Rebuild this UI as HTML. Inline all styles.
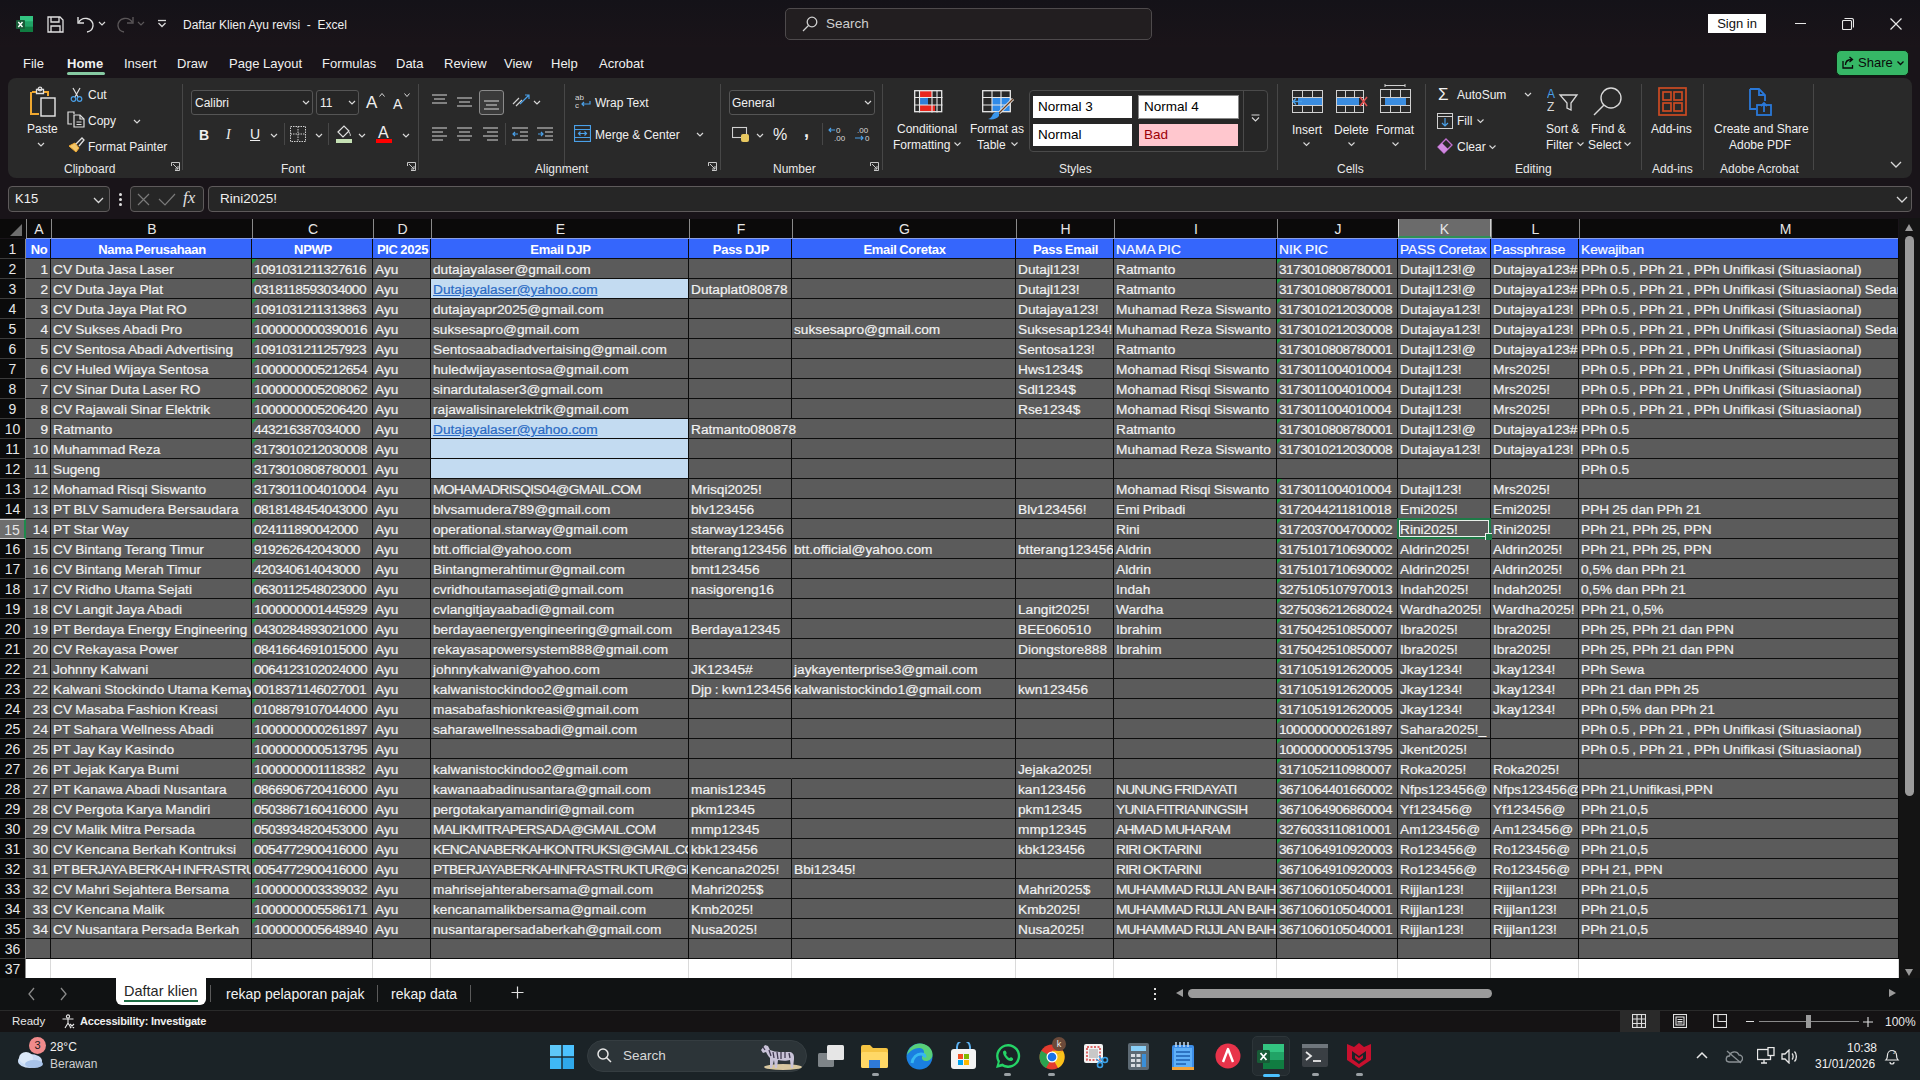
<!DOCTYPE html>
<html><head><meta charset="utf-8"><title>Excel</title>
<style>
*{box-sizing:border-box;margin:0;padding:0}
html,body{width:1920px;height:1080px;overflow:hidden;background:#191419;font-family:"Liberation Sans",sans-serif;color:#fff}
.a{position:absolute}
#titlebar{position:absolute;left:0;top:0;width:1920px;height:47px;background:linear-gradient(#141218,#1a1419)}
#menubar{position:absolute;left:0;top:47px;width:1920px;height:31px;background:#191419}
.mi{position:absolute;top:9px;font-size:13px;color:#f0f0f0;white-space:nowrap}
#ribbon{position:absolute;left:8px;top:78px;width:1904px;height:100px;background:#292929;border-radius:8px}
.rt{position:absolute;margin-top:1px;font-size:12px;color:#f0f0f0;white-space:nowrap}
.gl{position:absolute;top:84px;font-size:12px;color:#e8e8e8;white-space:nowrap}
.sep{position:absolute;top:6px;width:1px;height:86px;background:#474747}
.launch{position:absolute;top:84px;width:9px;height:9px}
#fbar{position:absolute;left:0;top:178px;width:1920px;height:40px;background:#191419}
.box{position:absolute;top:8px;height:26px;background:#262626;border:1px solid #5e5a5b;border-radius:4px}
#grid{position:absolute;left:0;top:0;width:1920px;height:0}
#colhdr{position:absolute;left:0;top:219px;width:1898px;height:19px;background:#0b0a0a}
.ch{position:absolute;top:0;height:19px;border-left:1px solid #8a8a8a;font-size:14px;line-height:21px;text-align:center;color:#e6e6e6}
.ch.sel{background:#6b6b6b;border-left:1px solid #d0d0d0;border-right:1px solid #d0d0d0;border-bottom:2px solid #2f8f56}
.corner{position:absolute;left:10px;top:5px;width:0;height:0;border-left:12px solid transparent;border-bottom:12px solid #6e6e6e}
.rh{position:absolute;left:0;width:26px;height:20px;background:#0b0b0b;border-bottom:1px solid #3c3c3c;border-right:1px solid #8c8c8c;font-size:14px;line-height:21px;text-align:center;color:#e6e6e6}
.rh.sel{background:#6e6e6e;border-right:2px solid #1f8a4c;border-top:1px solid #cfcfcf;border-bottom:1px solid #cfcfcf}
.c{position:absolute;height:20px;background:#5b5b5b;border-right:1px solid #0d0d0d;border-bottom:1px solid #0d0d0d;font-size:13.7px;line-height:20px;padding-top:1px;padding-left:2px;color:#f2f2f2;white-space:nowrap;overflow:hidden;word-spacing:-0.6px;-webkit-text-stroke:0.2px currentColor}
.c.hd{background:#3566fc;color:#fff}
.c.b{-webkit-text-stroke:0;font-weight:bold;text-align:center;font-size:13px;letter-spacing:-0.3px}
.c.num{text-align:right;padding-right:2px}
.c.dig{letter-spacing:-0.55px}
.c.caps{letter-spacing:-0.7px}
.c.lb{background:#c3dbf1;color:#2a6ac4}
.c.lb u{text-decoration:underline;text-decoration-color:#2a6ac4}
.c.ovf{overflow:visible;z-index:2}
.c.nbr{border-right-color:#5b5b5b}
.c.w{background:#fff;border-right:1px solid #dadada;border-bottom:none}
.c.tri::before{content:"";position:absolute;left:0;top:0;border-top:5px solid #1b9a3b;border-right:5px solid transparent}
#active{position:absolute;left:1397px;top:518px;width:94px;height:21px;border:2px solid #1e7a47;box-shadow:inset 0 0 0 1px #e8f0ea;z-index:5}
#active::after{content:"";position:absolute;right:-3px;bottom:-3px;width:6px;height:6px;background:#1e7a47;border-left:1px solid #f0f0f0;border-top:1px solid #f0f0f0}
#vscroll{position:absolute;left:1899px;top:218px;width:21px;height:760px;background:#141414}
</style></head><body>
<div id="titlebar">
 <svg class="a" style="left:16px;top:15px" width="17" height="18" viewBox="0 0 17 18">
  <rect x="4" y="1" width="13" height="16" rx="1.5" fill="#21a366"/>
  <rect x="4" y="1" width="13" height="5.3" fill="#33c481"/>
  <rect x="4" y="11.7" width="13" height="5.3" fill="#107c41"/>
  <rect x="0" y="5" width="9" height="9" rx="1" fill="#185c37"/>
  <path d="M2.3 7l4.2 5M6.5 7l-4.2 5" stroke="#fff" stroke-width="1.4"/>
 </svg>
 <svg class="a" style="left:47px;top:16px" width="17" height="17" viewBox="0 0 17 17" fill="none" stroke="#e0e0e0" stroke-width="1.3">
  <path d="M1 1h12l3 3v12H1z"/><path d="M4 1v5h8V1"/><path d="M4 16v-6h9v6"/>
 </svg>
 <svg class="a" style="left:76px;top:15px" width="20" height="18" viewBox="0 0 20 18" fill="none" stroke="#e0e0e0" stroke-width="1.4">
  <path d="M2 2v6h6"/><path d="M2.5 7.5C4.5 4 8 3 11 3.5c4 .7 6.5 4 6 7.5-.5 3.3-3 5.5-6 6"/>
 </svg>
 <svg class="a" style="left:98px;top:21px" width="8" height="5" viewBox="0 0 8 5" fill="none" stroke="#d8d8d8" stroke-width="1.2"><path d="M1 1l3 3 3-3"/></svg>
 <svg class="a" style="left:115px;top:15px" width="20" height="18" viewBox="0 0 20 18" fill="none" stroke="#5a5658" stroke-width="1.4">
  <path d="M18 2v6h-6"/><path d="M17.5 7.5C15.5 4 12 3 9 3.5c-4 .7-6.5 4-6 7.5.5 3.3 3 5.5 6 6"/>
 </svg>
 <svg class="a" style="left:137px;top:21px" width="8" height="5" viewBox="0 0 8 5" fill="none" stroke="#5a5658" stroke-width="1.2"><path d="M1 1l3 3 3-3"/></svg>
 <svg class="a" style="left:157px;top:19px" width="10" height="9" viewBox="0 0 10 9" fill="none" stroke="#d8d8d8" stroke-width="1.3"><path d="M1 1.5h8"/><path d="M1.5 4l3.5 3.5L8.5 4"/></svg>
 <div class="a" style="left:183px;top:18px;font-size:12px;color:#f0f0f0;white-space:nowrap">Daftar Klien Ayu revisi&nbsp; - &nbsp;Excel</div>
 <div class="a" style="left:785px;top:8px;width:367px;height:32px;border:1px solid #4e4a4c;border-radius:5px;background:#221e20"></div>
 <svg class="a" style="left:802px;top:16px" width="16" height="16" viewBox="0 0 16 16" fill="none" stroke="#d0d0d0" stroke-width="1.3"><circle cx="10" cy="6" r="4.8"/><path d="M6.5 9.5L1 15"/></svg>
 <div class="a" style="left:826px;top:16px;font-size:13.5px;color:#cfcfcf">Search</div>
 <div class="a" style="left:1708px;top:14px;width:58px;height:19px;background:#fff;color:#111;font-size:13px;line-height:19px;text-align:center">Sign in</div>
 <div class="a" style="left:1795px;top:23px;width:11px;height:1px;background:#e8e8e8"></div>
 <svg class="a" style="left:1842px;top:18px" width="12" height="12" viewBox="0 0 12 12" fill="none" stroke="#e8e8e8" stroke-width="1.1"><rect x="0.5" y="2.5" width="9" height="9" rx="1"/><path d="M2.5 0.5h7a2 2 0 0 1 2 2v7"/></svg>
 <svg class="a" style="left:1890px;top:18px" width="12" height="12" viewBox="0 0 12 12" stroke="#e8e8e8" stroke-width="1.2"><path d="M0.5 0.5l11 11M11.5 0.5l-11 11"/></svg>
</div>
<div id="menubar">
 <div class="mi" style="left:23px">File</div>
 <div class="mi" style="left:67px;font-weight:bold">Home</div>
 <div class="a" style="left:67px;top:25px;width:38px;height:3px;border-radius:2px;background:#86c9a2"></div>
 <div class="mi" style="left:124px">Insert</div>
 <div class="mi" style="left:177px">Draw</div>
 <div class="mi" style="left:229px">Page Layout</div>
 <div class="mi" style="left:322px">Formulas</div>
 <div class="mi" style="left:396px">Data</div>
 <div class="mi" style="left:444px">Review</div>
 <div class="mi" style="left:504px">View</div>
 <div class="mi" style="left:551px">Help</div>
 <div class="mi" style="left:599px">Acrobat</div>
 <div class="a" style="left:1836px;top:3px;width:73px;height:26px;background:#36b766;border:1.5px solid #0b1f10;border-radius:5px"></div>
 <svg class="a" style="left:1842px;top:9px" width="13" height="13" viewBox="0 0 13 13" fill="none" stroke="#0a0a0a" stroke-width="1.3"><path d="M1 5v7h9.5V9"/><path d="M3.5 9c0-3.5 2.5-5.5 6-5.5M7.5 1l3 2.5-3 2.5"/></svg>
 <div class="mi" style="left:1858px;top:8px;color:#0a0a0a;font-size:13px">Share</div>
 <svg class="a" style="left:1897px;top:14px" width="7" height="5" viewBox="0 0 7 5" fill="none" stroke="#0a0a0a" stroke-width="1.3"><path d="M0.5 0.5l3 3 3-3"/></svg>
</div>
<div id="ribbon">
 <!-- Clipboard -->
 <svg class="a" style="left:20px;top:8px" width="30" height="32" viewBox="0 0 30 32" fill="none">
  <path d="M4 6h5M15 6h5v4" stroke="#f0a830" stroke-width="2"/>
  <path d="M3 6v22h8" stroke="#f0a830" stroke-width="2"/>
  <path d="M8.5 3.5h7v4h-7z" stroke="#e0e0e0" stroke-width="1.3"/><circle cx="12" cy="3" r="1.8" stroke="#e0e0e0" stroke-width="1.2"/>
  <rect x="13" y="12" width="14" height="18" stroke="#e8e8e8" stroke-width="1.4"/>
 </svg>
 <div class="rt" style="left:19px;top:43px">Paste</div>
 <svg class="a" style="left:29px;top:64px" width="8" height="5" viewBox="0 0 8 5" fill="none" stroke="#d8d8d8" stroke-width="1.2"><path d="M1 1l3 3 3-3"/></svg>
 <svg class="a" style="left:62px;top:9px" width="13" height="15" viewBox="0 0 13 15" fill="none" stroke-width="1.2">
  <path d="M3 1l5 9M10 1L5 10" stroke="#e0e0e0"/><circle cx="3.5" cy="12" r="2.3" stroke="#4aa0e8"/><circle cx="9.5" cy="12" r="2.3" stroke="#4aa0e8"/>
 </svg>
 <div class="rt" style="left:80px;top:9px">Cut</div>
 <svg class="a" style="left:59px;top:33px" width="18" height="17" viewBox="0 0 18 17" fill="none" stroke="#e0e0e0" stroke-width="1.2">
  <path d="M7 3V1H1v12h4"/><path d="M7 4h6l4 4v8H7z"/><path d="M13 4v4h4M9.5 11h5M9.5 13.5h5"/>
 </svg>
 <div class="rt" style="left:80px;top:35px">Copy</div>
 <svg class="a" style="left:125px;top:41px" width="8" height="5" viewBox="0 0 8 5" fill="none" stroke="#d8d8d8" stroke-width="1.2"><path d="M1 1l3 3 3-3"/></svg>
 <svg class="a" style="left:59px;top:59px" width="18" height="16" viewBox="0 0 18 16" fill="none">
  <path d="M2 9l6-3 4 5-3 4z" fill="#f3c76b" stroke="#f0a830" stroke-width="1"/><path d="M9 7l6-6 2 2-5 6" stroke="#e0e0e0" stroke-width="1.3"/>
 </svg>
 <div class="rt" style="left:80px;top:61px">Format Painter</div>
 <div class="gl" style="left:56px">Clipboard</div>
 <svg class="launch" style="left:163px" viewBox="0 0 9 9" fill="none" stroke="#c8c8c8" stroke-width="1"><path d="M0.5 4V0.5h8v8H4"/><path d="M2 2l5 5M7 4v3H4"/></svg>
 <div class="sep" style="left:174px"></div>
 <!-- Font -->
 <div class="a" style="left:183px;top:12px;width:122px;height:25px;background:#262626;border:1px solid #555;border-radius:3px"></div>
 <div class="rt" style="left:187px;top:17px">Calibri</div>
 <svg class="a" style="left:294px;top:22px" width="8" height="5" viewBox="0 0 8 5" fill="none" stroke="#d8d8d8" stroke-width="1.2"><path d="M1 1l3 3 3-3"/></svg>
 <div class="a" style="left:308px;top:12px;width:43px;height:25px;background:#262626;border:1px solid #555;border-radius:3px"></div>
 <div class="rt" style="left:312px;top:17px">11</div>
 <svg class="a" style="left:340px;top:22px" width="8" height="5" viewBox="0 0 8 5" fill="none" stroke="#d8d8d8" stroke-width="1.2"><path d="M1 1l3 3 3-3"/></svg>
 <div class="rt" style="left:358px;top:14px;font-size:17px">A</div><svg class="a" style="left:371px;top:15px" width="6" height="4" viewBox="0 0 6 4" fill="none" stroke="#d8d8d8" stroke-width="1"><path d="M0.5 3.5l2.5-3 2.5 3"/></svg>
 <div class="rt" style="left:385px;top:17px;font-size:14px">A</div><svg class="a" style="left:396px;top:15px" width="6" height="4" viewBox="0 0 6 4" fill="none" stroke="#d8d8d8" stroke-width="1"><path d="M0.5 0.5l2.5 3 2.5-3"/></svg>
 <div class="rt" style="left:191px;top:48px;font-weight:bold;font-size:14px">B</div>
 <div class="rt" style="left:218px;top:48px;font-style:italic;font-size:14px;font-family:'Liberation Serif',serif">I</div>
 <div class="rt" style="left:242px;top:47px;font-size:14px;text-decoration:underline">U</div>
 <svg class="a" style="left:262px;top:55px" width="8" height="5" viewBox="0 0 8 5" fill="none" stroke="#d8d8d8" stroke-width="1.2"><path d="M1 1l3 3 3-3"/></svg>
 <div class="a" style="left:276px;top:45px;width:1px;height:22px;background:#474747"></div>
 <svg class="a" style="left:282px;top:48px" width="16" height="16" viewBox="0 0 16 16" fill="none" stroke="#d0d0d0" stroke-width="1" stroke-dasharray="1.5 1"><rect x="0.5" y="0.5" width="15" height="15"/><path d="M8 0.5v15M0.5 8h15"/></svg>
 <svg class="a" style="left:307px;top:55px" width="8" height="5" viewBox="0 0 8 5" fill="none" stroke="#d8d8d8" stroke-width="1.2"><path d="M1 1l3 3 3-3"/></svg>
 <div class="a" style="left:320px;top:45px;width:1px;height:22px;background:#474747"></div>
 <svg class="a" style="left:327px;top:45px" width="18" height="20" viewBox="0 0 18 20" fill="none">
  <path d="M3 9l6-6 5 5-6 6z" stroke="#e0e0e0" stroke-width="1.2"/><path d="M14 9c1 2 2 3 1 4" stroke="#e0e0e0" stroke-width="1"/>
  <rect x="1" y="16" width="16" height="4" fill="#c5e0b4"/>
 </svg>
 <svg class="a" style="left:350px;top:55px" width="8" height="5" viewBox="0 0 8 5" fill="none" stroke="#d8d8d8" stroke-width="1.2"><path d="M1 1l3 3 3-3"/></svg>
 <div class="rt" style="left:370px;top:45px;font-size:16px">A</div>
 <div class="a" style="left:368px;top:61px;width:16px;height:4px;background:#ff0000"></div>
 <svg class="a" style="left:394px;top:55px" width="8" height="5" viewBox="0 0 8 5" fill="none" stroke="#d8d8d8" stroke-width="1.2"><path d="M1 1l3 3 3-3"/></svg>
 <div class="gl" style="left:273px">Font</div>
 <svg class="launch" style="left:399px" viewBox="0 0 9 9" fill="none" stroke="#c8c8c8" stroke-width="1"><path d="M0.5 4V0.5h8v8H4"/><path d="M2 2l5 5M7 4v3H4"/></svg>
 <div class="sep" style="left:410px"></div>
 <!-- Alignment -->
 <svg class="a" style="left:424px;top:16px" width="15" height="13" viewBox="0 0 15 13" stroke="#d8d8d8" stroke-width="1.2"><path d="M0 1h15M2 5h11M0 9h15"/></svg>
 <svg class="a" style="left:449px;top:19px" width="15" height="13" viewBox="0 0 15 13" stroke="#d8d8d8" stroke-width="1.2"><path d="M0 1h15M2 5h11M0 9h15"/></svg>
 <div class="a" style="left:471px;top:12px;width:25px;height:25px;border:1px solid #8a8a8a;border-radius:3px;background:#3a3a3a"></div>
 <svg class="a" style="left:476px;top:20px" width="15" height="13" viewBox="0 0 15 13" stroke="#d8d8d8" stroke-width="1.2"><path d="M0 3h15M2 7h11M0 11h15"/></svg>
 <svg class="a" style="left:503px;top:14px" width="20" height="18" viewBox="0 0 20 18" fill="none" stroke-width="1.2"><path d="M2 12l6-6M5 14l6-6" stroke="#d0d0d0"/><path d="M9 12l9-9M14 3h4v4" stroke="#4aa0e8"/></svg>
 <svg class="a" style="left:525px;top:22px" width="8" height="5" viewBox="0 0 8 5" fill="none" stroke="#d8d8d8" stroke-width="1.2"><path d="M1 1l3 3 3-3"/></svg>
 <svg class="a" style="left:424px;top:49px" width="15" height="14" viewBox="0 0 15 14" stroke="#d8d8d8" stroke-width="1.2"><path d="M0 1h15M0 5h11M0 9h15M0 13h11"/></svg>
 <svg class="a" style="left:449px;top:49px" width="15" height="14" viewBox="0 0 15 14" stroke="#d8d8d8" stroke-width="1.2"><path d="M0 1h15M2 5h11M0 9h15M2 13h11"/></svg>
 <svg class="a" style="left:475px;top:49px" width="15" height="14" viewBox="0 0 15 14" stroke="#d8d8d8" stroke-width="1.2"><path d="M0 1h15M4 5h11M0 9h15M4 13h11"/></svg>
 <div class="a" style="left:497px;top:45px;width:1px;height:22px;background:#474747"></div>
 <svg class="a" style="left:504px;top:49px" width="16" height="14" viewBox="0 0 16 14" fill="none" stroke-width="1.2"><path d="M0 1h16M8 5h8M8 9h8M0 13h16" stroke="#d8d8d8"/><path d="M6 7H1M3 5L1 7l2 2" stroke="#4aa0e8"/></svg>
 <svg class="a" style="left:529px;top:49px" width="16" height="14" viewBox="0 0 16 14" fill="none" stroke-width="1.2"><path d="M0 1h16M8 5h8M8 9h8M0 13h16" stroke="#d8d8d8"/><path d="M1 7h5M4 5l2 2-2 2" stroke="#4aa0e8"/></svg>
 <div class="sep" style="left:556px"></div>
 <svg class="a" style="left:567px;top:15px" width="17" height="17" viewBox="0 0 17 17" fill="none"><text x="0" y="7" font-size="8" fill="#d8d8d8" font-family="Liberation Sans">ab</text><text x="0" y="15" font-size="8" fill="#d8d8d8" font-family="Liberation Sans">c</text><path d="M15 8v3H7M9 9l-2 2 2 2" stroke="#4aa0e8" stroke-width="1.2"/></svg>
 <div class="rt" style="left:587px;top:17px">Wrap Text</div>
 <svg class="a" style="left:566px;top:47px" width="17" height="17" viewBox="0 0 17 17" fill="none" stroke="#4aa0e8" stroke-width="1.2"><rect x="0.5" y="0.5" width="16" height="16"/><path d="M0.5 4.5h16M0.5 12.5h16M5 8.5h7M6.5 6.5l-2 2 2 2M10.5 6.5l2 2-2 2"/></svg>
 <div class="rt" style="left:587px;top:49px">Merge &amp; Center</div>
 <svg class="a" style="left:688px;top:54px" width="8" height="5" viewBox="0 0 8 5" fill="none" stroke="#d8d8d8" stroke-width="1.2"><path d="M1 1l3 3 3-3"/></svg>
 <div class="gl" style="left:527px">Alignment</div>
 <svg class="launch" style="left:700px" viewBox="0 0 9 9" fill="none" stroke="#c8c8c8" stroke-width="1"><path d="M0.5 4V0.5h8v8H4"/><path d="M2 2l5 5M7 4v3H4"/></svg>
 <div class="sep" style="left:712px"></div>
 <!-- Number -->
 <div class="a" style="left:721px;top:12px;width:146px;height:25px;background:#262626;border:1px solid #555;border-radius:3px"></div>
 <div class="rt" style="left:724px;top:17px">General</div>
 <svg class="a" style="left:856px;top:22px" width="8" height="5" viewBox="0 0 8 5" fill="none" stroke="#d8d8d8" stroke-width="1.2"><path d="M1 1l3 3 3-3"/></svg>
 <svg class="a" style="left:724px;top:48px" width="19" height="17" viewBox="0 0 19 17" fill="none"><rect x="0.5" y="1.5" width="14" height="10" stroke="#d0d0d0" stroke-width="1.1"/><rect x="9" y="8" width="8" height="8" rx="2" fill="#e8c860"/></svg>
 <svg class="a" style="left:748px;top:55px" width="8" height="5" viewBox="0 0 8 5" fill="none" stroke="#d8d8d8" stroke-width="1.2"><path d="M1 1l3 3 3-3"/></svg>
 <div class="rt" style="left:765px;top:47px;font-size:16px">%</div>
 <div class="rt" style="left:796px;top:42px;font-size:18px;font-weight:bold">,</div>
 <div class="a" style="left:814px;top:45px;width:1px;height:22px;background:#474747"></div>
 <svg class="a" style="left:820px;top:48px" width="20" height="16" viewBox="0 0 20 16" fill="none"><text x="8" y="7" font-size="8" fill="#d8d8d8" font-family="Liberation Sans">0</text><text x="6" y="15" font-size="8" fill="#d8d8d8" font-family="Liberation Sans">.00</text><path d="M7 4H1M3 2L1 4l2 2" stroke="#4aa0e8" stroke-width="1.1"/></svg>
 <svg class="a" style="left:845px;top:48px" width="20" height="16" viewBox="0 0 20 16" fill="none"><text x="4" y="7" font-size="8" fill="#d8d8d8" font-family="Liberation Sans">.00</text><text x="12" y="15" font-size="8" fill="#d8d8d8" font-family="Liberation Sans">0</text><path d="M2 12h8M8 10l2 2-2 2" stroke="#4aa0e8" stroke-width="1.1"/></svg>
 <div class="gl" style="left:765px">Number</div>
 <svg class="launch" style="left:862px" viewBox="0 0 9 9" fill="none" stroke="#c8c8c8" stroke-width="1"><path d="M0.5 4V0.5h8v8H4"/><path d="M2 2l5 5M7 4v3H4"/></svg>
 <div class="sep" style="left:874px"></div>
 <!-- Styles -->
 <svg class="a" style="left:906px;top:12px" width="29" height="23" viewBox="0 0 29 23" fill="none">
  <rect x="6" y="1" width="12" height="6.5" fill="#e8261e"/><rect x="6" y="15" width="15" height="6.5" fill="#e8261e"/><rect x="6" y="8" width="8" height="7" fill="#2f7fd8"/>
  <rect x="0.7" y="0.7" width="27" height="21" stroke="#e8e8e8" stroke-width="1.3"/><path d="M5.5 0.5v22M18 0.5v22M23 0.5v22M0.5 7.5h28M0.5 15h28" stroke="#e8e8e8" stroke-width="1.1"/>
 </svg>
 <div class="rt" style="left:889px;top:43px">Conditional</div>
 <div class="rt" style="left:885px;top:59px">Formatting</div>
 <svg class="a" style="left:946px;top:64px" width="7" height="5" viewBox="0 0 7 5" fill="none" stroke="#d8d8d8" stroke-width="1.1"><path d="M0.5 0.5l3 3 3-3"/></svg>
 <svg class="a" style="left:974px;top:12px" width="34" height="30" viewBox="0 0 34 30" fill="none">
  <rect x="10" y="8" width="18" height="14" fill="#2f8ae8"/>
  <rect x="0.7" y="0.7" width="27.6" height="21" stroke="#e8e8e8" stroke-width="1.3"/><path d="M10 0.5v22M19 0.5v22M0.5 7.5h28M0.5 15h28" stroke="#e8e8e8" stroke-width="1.1"/>
  <path d="M31 9L17 23" stroke="#e8e8e8" stroke-width="3"/><path d="M31 9L17 23" stroke="#6b3f1f" stroke-width="1.2"/>
  <path d="M17 22c-3-1-6 1-7 4-1 2-3 3-4 3 4 1 9 0 11-3z" fill="#3a96ec"/>
 </svg>
 <div class="rt" style="left:962px;top:43px">Format as</div>
 <div class="rt" style="left:969px;top:59px">Table</div>
 <svg class="a" style="left:1003px;top:64px" width="7" height="5" viewBox="0 0 7 5" fill="none" stroke="#d8d8d8" stroke-width="1.1"><path d="M0.5 0.5l3 3 3-3"/></svg>
 <div class="a" style="left:1021px;top:12px;width:239px;height:62px;border:1px solid #4a4a4a;border-radius:4px;background:#262626"></div>
 <div class="a" style="left:1025px;top:18px;width:99px;height:22px;background:#fff;color:#000;font-size:13.5px;line-height:22px;padding-left:5px">Normal 3</div>
 <div class="a" style="left:1130px;top:17px;width:101px;height:24px;background:#fff;color:#000;font-size:13.5px;line-height:23px;padding-left:5px;border:1px solid #888"></div>
 <div class="a" style="left:1136px;top:18px;font-size:13.5px;color:#000;line-height:22px">Normal 4</div>
 <div class="a" style="left:1025px;top:46px;width:99px;height:22px;background:#fff;color:#000;font-size:13.5px;line-height:22px;padding-left:5px">Normal</div>
 <div class="a" style="left:1131px;top:46px;width:99px;height:22px;background:#ffc7ce;color:#9c0006;font-size:13.5px;line-height:22px;padding-left:5px">Bad</div>
 <div class="a" style="left:1235px;top:12px;width:1px;height:62px;background:#4a4a4a"></div>
 <svg class="a" style="left:1243px;top:36px" width="9" height="8" viewBox="0 0 9 8" fill="none" stroke="#d8d8d8" stroke-width="1.1"><path d="M0.5 1h8M1 3.5l3.5 3.5L8 3.5"/></svg>
 <div class="gl" style="left:1051px">Styles</div>
 <div class="sep" style="left:1269px"></div>
 <!-- Cells -->
 <svg class="a" style="left:1284px;top:12px" width="31" height="23" viewBox="0 0 31 23" fill="none">
  <rect x="0.5" y="0.5" width="30" height="22" stroke="#d0d0d0"/><path d="M0.5 7.5h30M0.5 15.5h30M10.5 0.5v22M20.5 0.5v22" stroke="#d0d0d0"/>
  <rect x="6" y="8" width="24" height="7" fill="#3b8de0"/><path d="M10 11.5H1M4 8.5l-3 3 3 3" stroke="#4aa0e8" stroke-width="1.4"/>
 </svg>
 <div class="rt" style="left:1284px;top:44px">Insert</div>
 <svg class="a" style="left:1295px;top:64px" width="7" height="5" viewBox="0 0 7 5" fill="none" stroke="#d8d8d8" stroke-width="1.1"><path d="M0.5 0.5l3 3 3-3"/></svg>
 <svg class="a" style="left:1328px;top:12px" width="32" height="23" viewBox="0 0 32 23" fill="none">
  <rect x="0.5" y="0.5" width="27" height="22" stroke="#d0d0d0"/><path d="M0.5 7.5h27M0.5 15.5h27M9.5 0.5v22M18.5 0.5v22" stroke="#d0d0d0"/>
  <rect x="1" y="8" width="22" height="7" fill="#3b8de0"/><path d="M24 7l7 9M31 7l-7 9" stroke="#e05050" stroke-width="1.6"/>
 </svg>
 <div class="rt" style="left:1326px;top:44px">Delete</div>
 <svg class="a" style="left:1340px;top:64px" width="7" height="5" viewBox="0 0 7 5" fill="none" stroke="#d8d8d8" stroke-width="1.1"><path d="M0.5 0.5l3 3 3-3"/></svg>
 <svg class="a" style="left:1372px;top:6px" width="31" height="29" viewBox="0 0 31 29" fill="none">
  <path d="M5 1.5h20M5 0v3M25 0v3" stroke="#d0d0d0"/>
  <rect x="0.5" y="5.5" width="30" height="23" stroke="#d0d0d0"/><path d="M0.5 13.5h30M0.5 21.5h30M10.5 5.5v23M20.5 5.5v23" stroke="#d0d0d0"/>
  <rect x="5" y="14" width="21" height="7" fill="#3b8de0"/>
 </svg>
 <div class="rt" style="left:1368px;top:44px">Format</div>
 <svg class="a" style="left:1384px;top:64px" width="7" height="5" viewBox="0 0 7 5" fill="none" stroke="#d8d8d8" stroke-width="1.1"><path d="M0.5 0.5l3 3 3-3"/></svg>
 <div class="gl" style="left:1329px">Cells</div>
 <div class="sep" style="left:1417px"></div>
 <!-- Editing -->
 <div class="rt" style="left:1430px;top:6px;font-size:17px">&Sigma;</div>
 <div class="rt" style="left:1449px;top:9px">AutoSum</div>
 <svg class="a" style="left:1516px;top:14px" width="8" height="5" viewBox="0 0 8 5" fill="none" stroke="#d8d8d8" stroke-width="1.2"><path d="M1 1l3 3 3-3"/></svg>
 <svg class="a" style="left:1429px;top:35px" width="16" height="16" viewBox="0 0 16 16" fill="none"><rect x="0.5" y="0.5" width="15" height="15" stroke="#d0d0d0"/><path d="M0.5 3.5h15" stroke="#d0d0d0"/><path d="M8 5v8M5 10l3 3 3-3" stroke="#4aa0e8" stroke-width="1.2"/></svg>
 <div class="rt" style="left:1449px;top:35px">Fill</div>
 <svg class="a" style="left:1469px;top:41px" width="7" height="5" viewBox="0 0 7 5" fill="none" stroke="#d8d8d8" stroke-width="1.1"><path d="M0.5 0.5l3 3 3-3"/></svg>
 <svg class="a" style="left:1429px;top:60px" width="16" height="16" viewBox="0 0 16 16" fill="none"><path d="M9 1l6 6-8 8-6-6z" stroke="#c070d0" stroke-width="1.3"/><path d="M1 9l4-4 6 6-4 4z" fill="#d08ae0"/></svg>
 <div class="rt" style="left:1449px;top:61px">Clear</div>
 <svg class="a" style="left:1481px;top:67px" width="7" height="5" viewBox="0 0 7 5" fill="none" stroke="#d8d8d8" stroke-width="1.1"><path d="M0.5 0.5l3 3 3-3"/></svg>
 <svg class="a" style="left:1539px;top:8px" width="32" height="27" viewBox="0 0 32 27" fill="none">
  <text x="0" y="12" font-size="12" fill="#4aa0e8" font-family="Liberation Sans">A</text><text x="0" y="25" font-size="12" fill="#d8d8d8" font-family="Liberation Sans">Z</text>
  <path d="M13 9h17l-6 8v7l-4-2v-5z" stroke="#d8d8d8" stroke-width="1.3"/>
 </svg>
 <div class="rt" style="left:1538px;top:43px">Sort &amp;</div>
 <div class="rt" style="left:1538px;top:59px">Filter</div>
 <svg class="a" style="left:1569px;top:64px" width="7" height="5" viewBox="0 0 7 5" fill="none" stroke="#d8d8d8" stroke-width="1.1"><path d="M0.5 0.5l3 3 3-3"/></svg>
 <svg class="a" style="left:1585px;top:8px" width="30" height="30" viewBox="0 0 30 30" fill="none" stroke="#d8d8d8" stroke-width="1.4"><circle cx="18" cy="12" r="10"/><path d="M11 19L1 29"/></svg>
 <div class="rt" style="left:1583px;top:43px">Find &amp;</div>
 <div class="rt" style="left:1580px;top:59px">Select</div>
 <svg class="a" style="left:1616px;top:64px" width="7" height="5" viewBox="0 0 7 5" fill="none" stroke="#d8d8d8" stroke-width="1.1"><path d="M0.5 0.5l3 3 3-3"/></svg>
 <div class="gl" style="left:1507px">Editing</div>
 <div class="sep" style="left:1633px"></div>
 <!-- Add-ins -->
 <svg class="a" style="left:1650px;top:9px" width="29" height="29" viewBox="0 0 29 29" fill="none" stroke="#cc4a22" stroke-width="1.7">
  <rect x="1" y="1" width="27" height="27"/><rect x="5" y="5" width="8" height="8"/><rect x="16" y="5" width="8" height="8"/><rect x="5" y="16" width="8" height="8"/><rect x="16" y="16" width="8" height="8"/>
 </svg>
 <div class="rt" style="left:1643px;top:43px">Add-ins</div>
 <div class="gl" style="left:1644px">Add-ins</div>
 <div class="sep" style="left:1695px"></div>
 <!-- Adobe -->
 <svg class="a" style="left:1740px;top:10px" width="25" height="28" viewBox="0 0 25 28" fill="none" stroke="#2a78d8" stroke-width="1.8">
  <path d="M2 1h9l6 6v6"/><path d="M2 1v20h6"/><path d="M11 1v6h6"/><rect x="9" y="17" width="14" height="10"/><path d="M16 24v-9M13 18l3-3 3 3"/>
 </svg>
 <div class="rt" style="left:1706px;top:43px">Create and Share</div>
 <div class="rt" style="left:1721px;top:59px">Adobe PDF</div>
 <div class="gl" style="left:1712px">Adobe Acrobat</div>
 <div class="sep" style="left:1805px"></div>
 <svg class="a" style="left:1882px;top:83px" width="12" height="7" viewBox="0 0 12 7" fill="none" stroke="#d8d8d8" stroke-width="1.3"><path d="M1 1l5 5 5-5"/></svg>
</div>
<div id="fbar">
 <div class="box" style="left:8px;width:102px"></div>
 <div class="a" style="left:15px;top:13px;font-size:13px;color:#f0f0f0">K15</div>
 <svg class="a" style="left:93px;top:19px" width="11" height="7" viewBox="0 0 11 7" fill="none" stroke="#d8d8d8" stroke-width="1.3"><path d="M1 1l4.5 4.5L10 1"/></svg>
 <div class="a" style="left:119px;top:15px;width:3px;height:3px;background:#e0e0e0;border-radius:2px"></div>
 <div class="a" style="left:119px;top:20px;width:3px;height:3px;background:#e0e0e0;border-radius:2px"></div>
 <div class="a" style="left:119px;top:25px;width:3px;height:3px;background:#e0e0e0;border-radius:2px"></div>
 <div class="box" style="left:130px;width:74px"></div>
 <svg class="a" style="left:137px;top:15px" width="13" height="13" viewBox="0 0 13 13" stroke="#7a7a7a" stroke-width="1.2"><path d="M1 1l11 11M12 1L1 12"/></svg>
 <svg class="a" style="left:158px;top:15px" width="18" height="13" viewBox="0 0 18 13" fill="none" stroke="#7a7a7a" stroke-width="1.2"><path d="M1 6l6 6L17 1"/></svg>
 <div class="a" style="left:183px;top:10px;font-family:'Liberation Serif',serif;font-style:italic;font-size:17px;color:#e0e0e0">fx</div>
 <div class="box" style="left:208px;width:1704px"></div>
 <div class="a" style="left:220px;top:13px;font-size:13.5px;color:#f0f0f0">Rini2025!</div>
 <svg class="a" style="left:1896px;top:18px" width="12" height="7" viewBox="0 0 12 7" fill="none" stroke="#d8d8d8" stroke-width="1.3"><path d="M1 1l5 5 5-5"/></svg>
</div>
<div id="grid"><div id="colhdr">
<div class="ch" style="left:26px;width:25px">A</div>
<div class="ch" style="left:51px;width:201px">B</div>
<div class="ch" style="left:252px;width:121px">C</div>
<div class="ch" style="left:373px;width:58px">D</div>
<div class="ch" style="left:431px;width:258px">E</div>
<div class="ch" style="left:689px;width:103px">F</div>
<div class="ch" style="left:792px;width:224px">G</div>
<div class="ch" style="left:1016px;width:98px">H</div>
<div class="ch" style="left:1114px;width:163px">I</div>
<div class="ch" style="left:1277px;width:121px">J</div>
<div class="ch sel" style="left:1398px;width:93px">K</div>
<div class="ch" style="left:1491px;width:88px">L</div>
<div class="ch" style="left:1579px;width:320px;text-indent:92px">M</div>
<div class="corner"></div></div>
<div class="a" style="left:26px;top:238px;width:1872px;height:1px;background:#8a9ee6;z-index:3"></div>
<div class="rh" style="top:239px">1</div>
<div class="rh" style="top:259px">2</div>
<div class="rh" style="top:279px">3</div>
<div class="rh" style="top:299px">4</div>
<div class="rh" style="top:319px">5</div>
<div class="rh" style="top:339px">6</div>
<div class="rh" style="top:359px">7</div>
<div class="rh" style="top:379px">8</div>
<div class="rh" style="top:399px">9</div>
<div class="rh" style="top:419px">10</div>
<div class="rh" style="top:439px">11</div>
<div class="rh" style="top:459px">12</div>
<div class="rh" style="top:479px">13</div>
<div class="rh" style="top:499px">14</div>
<div class="rh sel" style="top:519px">15</div>
<div class="rh" style="top:539px">16</div>
<div class="rh" style="top:559px">17</div>
<div class="rh" style="top:579px">18</div>
<div class="rh" style="top:599px">19</div>
<div class="rh" style="top:619px">20</div>
<div class="rh" style="top:639px">21</div>
<div class="rh" style="top:659px">22</div>
<div class="rh" style="top:679px">23</div>
<div class="rh" style="top:699px">24</div>
<div class="rh" style="top:719px">25</div>
<div class="rh" style="top:739px">26</div>
<div class="rh" style="top:759px">27</div>
<div class="rh" style="top:779px">28</div>
<div class="rh" style="top:799px">29</div>
<div class="rh" style="top:819px">30</div>
<div class="rh" style="top:839px">31</div>
<div class="rh" style="top:859px">32</div>
<div class="rh" style="top:879px">33</div>
<div class="rh" style="top:899px">34</div>
<div class="rh" style="top:919px">35</div>
<div class="rh" style="top:939px">36</div>
<div class="rh" style="top:959px">37</div>
<div class="c hd b" style="left:26px;top:239px;width:25px;">No</div>
<div class="c hd b" style="left:51px;top:239px;width:201px;">Nama Perusahaan</div>
<div class="c hd b" style="left:252px;top:239px;width:121px;">NPWP</div>
<div class="c hd b" style="left:373px;top:239px;width:58px;">PIC 2025</div>
<div class="c hd b" style="left:431px;top:239px;width:258px;">Email DJP</div>
<div class="c hd b" style="left:689px;top:239px;width:103px;">Pass DJP</div>
<div class="c hd b" style="left:792px;top:239px;width:224px;">Email Coretax</div>
<div class="c hd b" style="left:1016px;top:239px;width:98px;">Pass Email</div>
<div class="c hd l" style="left:1114px;top:239px;width:163px;">NAMA PIC</div>
<div class="c hd l" style="left:1277px;top:239px;width:121px;">NIK PIC</div>
<div class="c hd l" style="left:1398px;top:239px;width:93px;">PASS Coretax</div>
<div class="c hd l" style="left:1491px;top:239px;width:88px;">Passphrase</div>
<div class="c hd l" style="left:1579px;top:239px;width:320px;">Kewajiban</div>
<div class="c num" style="left:26px;top:259px;width:25px;">1</div>
<div class="c " style="left:51px;top:259px;width:201px;">CV Duta Jasa Laser</div>
<div class="c  tri dig" style="left:252px;top:259px;width:121px;">1091031211327616</div>
<div class="c " style="left:373px;top:259px;width:58px;">Ayu</div>
<div class="c " style="left:431px;top:259px;width:258px;">dutajayalaser@gmail.com</div>
<div class="c " style="left:689px;top:259px;width:103px;"></div>
<div class="c " style="left:792px;top:259px;width:224px;"></div>
<div class="c " style="left:1016px;top:259px;width:98px;">Dutajl123!</div>
<div class="c " style="left:1114px;top:259px;width:163px;">Ratmanto</div>
<div class="c  tri dig" style="left:1277px;top:259px;width:121px;">3173010808780001</div>
<div class="c " style="left:1398px;top:259px;width:93px;">Dutajl123!@</div>
<div class="c " style="left:1491px;top:259px;width:88px;">Dutajaya123#</div>
<div class="c " style="left:1579px;top:259px;width:320px;">PPh 0.5 , PPh 21 , PPh Unifikasi (Situasiaonal)</div>
<div class="c num" style="left:26px;top:279px;width:25px;">2</div>
<div class="c " style="left:51px;top:279px;width:201px;">CV Duta Jaya Plat</div>
<div class="c  tri dig" style="left:252px;top:279px;width:121px;">0318118593034000</div>
<div class="c " style="left:373px;top:279px;width:58px;">Ayu</div>
<div class="c lb" style="left:431px;top:279px;width:258px;"><u>Dutajayalaser@yahoo.com</u></div>
<div class="c " style="left:689px;top:279px;width:103px;">Dutaplat080878</div>
<div class="c " style="left:792px;top:279px;width:224px;"></div>
<div class="c " style="left:1016px;top:279px;width:98px;">Dutajl123!</div>
<div class="c " style="left:1114px;top:279px;width:163px;">Ratmanto</div>
<div class="c  tri dig" style="left:1277px;top:279px;width:121px;">3173010808780001</div>
<div class="c " style="left:1398px;top:279px;width:93px;">Dutajl123!@</div>
<div class="c " style="left:1491px;top:279px;width:88px;">Dutajaya123#</div>
<div class="c " style="left:1579px;top:279px;width:320px;">PPh 0.5 , PPh 21 , PPh Unifikasi (Situasiaonal) Sedang dalam proses</div>
<div class="c num" style="left:26px;top:299px;width:25px;">3</div>
<div class="c " style="left:51px;top:299px;width:201px;">CV Duta Jaya Plat RO</div>
<div class="c  tri dig" style="left:252px;top:299px;width:121px;">1091031211313863</div>
<div class="c " style="left:373px;top:299px;width:58px;">Ayu</div>
<div class="c " style="left:431px;top:299px;width:258px;">dutajayapr2025@gmail.com</div>
<div class="c " style="left:689px;top:299px;width:103px;"></div>
<div class="c " style="left:792px;top:299px;width:224px;"></div>
<div class="c " style="left:1016px;top:299px;width:98px;">Dutajaya123!</div>
<div class="c " style="left:1114px;top:299px;width:163px;">Muhamad Reza Siswanto</div>
<div class="c  tri dig" style="left:1277px;top:299px;width:121px;">3173010212030008</div>
<div class="c " style="left:1398px;top:299px;width:93px;">Dutajaya123!</div>
<div class="c " style="left:1491px;top:299px;width:88px;">Dutajaya123!</div>
<div class="c " style="left:1579px;top:299px;width:320px;">PPh 0.5 , PPh 21 , PPh Unifikasi (Situasiaonal)</div>
<div class="c num" style="left:26px;top:319px;width:25px;">4</div>
<div class="c " style="left:51px;top:319px;width:201px;">CV Sukses Abadi Pro</div>
<div class="c  tri dig" style="left:252px;top:319px;width:121px;">1000000000390016</div>
<div class="c " style="left:373px;top:319px;width:58px;">Ayu</div>
<div class="c " style="left:431px;top:319px;width:258px;">suksesapro@gmail.com</div>
<div class="c " style="left:689px;top:319px;width:103px;"></div>
<div class="c " style="left:792px;top:319px;width:224px;">suksesapro@gmail.com</div>
<div class="c " style="left:1016px;top:319px;width:98px;">Suksesap1234!</div>
<div class="c " style="left:1114px;top:319px;width:163px;">Muhamad Reza Siswanto</div>
<div class="c  tri dig" style="left:1277px;top:319px;width:121px;">3173010212030008</div>
<div class="c " style="left:1398px;top:319px;width:93px;">Dutajaya123!</div>
<div class="c " style="left:1491px;top:319px;width:88px;">Dutajaya123!</div>
<div class="c " style="left:1579px;top:319px;width:320px;">PPh 0.5 , PPh 21 , PPh Unifikasi (Situasiaonal) Sedang dalam proses</div>
<div class="c num" style="left:26px;top:339px;width:25px;">5</div>
<div class="c " style="left:51px;top:339px;width:201px;">CV Sentosa Abadi Advertising</div>
<div class="c  tri dig" style="left:252px;top:339px;width:121px;">1091031211257923</div>
<div class="c " style="left:373px;top:339px;width:58px;">Ayu</div>
<div class="c " style="left:431px;top:339px;width:258px;">Sentosaabadiadvertaising@gmail.com</div>
<div class="c " style="left:689px;top:339px;width:103px;"></div>
<div class="c " style="left:792px;top:339px;width:224px;"></div>
<div class="c " style="left:1016px;top:339px;width:98px;">Sentosa123!</div>
<div class="c " style="left:1114px;top:339px;width:163px;">Ratmanto</div>
<div class="c  tri dig" style="left:1277px;top:339px;width:121px;">3173010808780001</div>
<div class="c " style="left:1398px;top:339px;width:93px;">Dutajl123!@</div>
<div class="c " style="left:1491px;top:339px;width:88px;">Dutajaya123#</div>
<div class="c " style="left:1579px;top:339px;width:320px;">PPh 0.5 , PPh 21 , PPh Unifikasi (Situasiaonal)</div>
<div class="c num" style="left:26px;top:359px;width:25px;">6</div>
<div class="c " style="left:51px;top:359px;width:201px;">CV Huled Wijaya Sentosa</div>
<div class="c  tri dig" style="left:252px;top:359px;width:121px;">1000000005212654</div>
<div class="c " style="left:373px;top:359px;width:58px;">Ayu</div>
<div class="c " style="left:431px;top:359px;width:258px;">huledwijayasentosa@gmail.com</div>
<div class="c " style="left:689px;top:359px;width:103px;"></div>
<div class="c " style="left:792px;top:359px;width:224px;"></div>
<div class="c " style="left:1016px;top:359px;width:98px;">Hws1234$</div>
<div class="c " style="left:1114px;top:359px;width:163px;">Mohamad Risqi Siswanto</div>
<div class="c  tri dig" style="left:1277px;top:359px;width:121px;">3173011004010004</div>
<div class="c " style="left:1398px;top:359px;width:93px;">Dutajl123!</div>
<div class="c " style="left:1491px;top:359px;width:88px;">Mrs2025!</div>
<div class="c " style="left:1579px;top:359px;width:320px;">PPh 0.5 , PPh 21 , PPh Unifikasi (Situasiaonal)</div>
<div class="c num" style="left:26px;top:379px;width:25px;">7</div>
<div class="c " style="left:51px;top:379px;width:201px;">CV Sinar Duta Laser RO</div>
<div class="c  tri dig" style="left:252px;top:379px;width:121px;">1000000005208062</div>
<div class="c " style="left:373px;top:379px;width:58px;">Ayu</div>
<div class="c " style="left:431px;top:379px;width:258px;">sinardutalaser3@gmail.com</div>
<div class="c " style="left:689px;top:379px;width:103px;"></div>
<div class="c " style="left:792px;top:379px;width:224px;"></div>
<div class="c " style="left:1016px;top:379px;width:98px;">Sdl1234$</div>
<div class="c " style="left:1114px;top:379px;width:163px;">Mohamad Risqi Siswanto</div>
<div class="c  tri dig" style="left:1277px;top:379px;width:121px;">3173011004010004</div>
<div class="c " style="left:1398px;top:379px;width:93px;">Dutajl123!</div>
<div class="c " style="left:1491px;top:379px;width:88px;">Mrs2025!</div>
<div class="c " style="left:1579px;top:379px;width:320px;">PPh 0.5 , PPh 21 , PPh Unifikasi (Situasiaonal)</div>
<div class="c num" style="left:26px;top:399px;width:25px;">8</div>
<div class="c " style="left:51px;top:399px;width:201px;">CV Rajawali Sinar Elektrik</div>
<div class="c  tri dig" style="left:252px;top:399px;width:121px;">1000000005206420</div>
<div class="c " style="left:373px;top:399px;width:58px;">Ayu</div>
<div class="c " style="left:431px;top:399px;width:258px;">rajawalisinarelektrik@gmail.com</div>
<div class="c " style="left:689px;top:399px;width:103px;"></div>
<div class="c " style="left:792px;top:399px;width:224px;"></div>
<div class="c " style="left:1016px;top:399px;width:98px;">Rse1234$</div>
<div class="c " style="left:1114px;top:399px;width:163px;">Mohamad Risqi Siswanto</div>
<div class="c  tri dig" style="left:1277px;top:399px;width:121px;">3173011004010004</div>
<div class="c " style="left:1398px;top:399px;width:93px;">Dutajl123!</div>
<div class="c " style="left:1491px;top:399px;width:88px;">Mrs2025!</div>
<div class="c " style="left:1579px;top:399px;width:320px;">PPh 0.5 , PPh 21 , PPh Unifikasi (Situasiaonal)</div>
<div class="c num" style="left:26px;top:419px;width:25px;">9</div>
<div class="c " style="left:51px;top:419px;width:201px;">Ratmanto</div>
<div class="c  tri dig" style="left:252px;top:419px;width:121px;">443216387034000</div>
<div class="c " style="left:373px;top:419px;width:58px;">Ayu</div>
<div class="c lb" style="left:431px;top:419px;width:258px;"><u>Dutajayalaser@yahoo.com</u></div>
<div class="c  ovf nbr" style="left:689px;top:419px;width:103px;">Ratmanto080878</div>
<div class="c " style="left:792px;top:419px;width:224px;"></div>
<div class="c " style="left:1016px;top:419px;width:98px;"></div>
<div class="c " style="left:1114px;top:419px;width:163px;">Ratmanto</div>
<div class="c  tri dig" style="left:1277px;top:419px;width:121px;">3173010808780001</div>
<div class="c " style="left:1398px;top:419px;width:93px;">Dutajl123!@</div>
<div class="c " style="left:1491px;top:419px;width:88px;">Dutajaya123#</div>
<div class="c " style="left:1579px;top:419px;width:320px;">PPh 0.5</div>
<div class="c num" style="left:26px;top:439px;width:25px;">10</div>
<div class="c " style="left:51px;top:439px;width:201px;">Muhammad Reza</div>
<div class="c  tri dig" style="left:252px;top:439px;width:121px;">3173010212030008</div>
<div class="c " style="left:373px;top:439px;width:58px;">Ayu</div>
<div class="c lb" style="left:431px;top:439px;width:258px;"></div>
<div class="c " style="left:689px;top:439px;width:103px;"></div>
<div class="c " style="left:792px;top:439px;width:224px;"></div>
<div class="c " style="left:1016px;top:439px;width:98px;"></div>
<div class="c " style="left:1114px;top:439px;width:163px;">Muhamad Reza Siswanto</div>
<div class="c  tri dig" style="left:1277px;top:439px;width:121px;">3173010212030008</div>
<div class="c " style="left:1398px;top:439px;width:93px;">Dutajaya123!</div>
<div class="c " style="left:1491px;top:439px;width:88px;">Dutajaya123!</div>
<div class="c " style="left:1579px;top:439px;width:320px;">PPh 0.5</div>
<div class="c num" style="left:26px;top:459px;width:25px;">11</div>
<div class="c " style="left:51px;top:459px;width:201px;">Sugeng</div>
<div class="c  tri dig" style="left:252px;top:459px;width:121px;">3173010808780001</div>
<div class="c " style="left:373px;top:459px;width:58px;">Ayu</div>
<div class="c lb" style="left:431px;top:459px;width:258px;"></div>
<div class="c " style="left:689px;top:459px;width:103px;"></div>
<div class="c " style="left:792px;top:459px;width:224px;"></div>
<div class="c " style="left:1016px;top:459px;width:98px;"></div>
<div class="c " style="left:1114px;top:459px;width:163px;"></div>
<div class="c " style="left:1277px;top:459px;width:121px;"></div>
<div class="c " style="left:1398px;top:459px;width:93px;"></div>
<div class="c " style="left:1491px;top:459px;width:88px;"></div>
<div class="c " style="left:1579px;top:459px;width:320px;">PPh 0.5</div>
<div class="c num" style="left:26px;top:479px;width:25px;">12</div>
<div class="c " style="left:51px;top:479px;width:201px;">Mohamad Risqi Siswanto</div>
<div class="c  tri dig" style="left:252px;top:479px;width:121px;">3173011004010004</div>
<div class="c " style="left:373px;top:479px;width:58px;">Ayu</div>
<div class="c  caps" style="left:431px;top:479px;width:258px;">MOHAMADRISQIS04@GMAIL.COM</div>
<div class="c " style="left:689px;top:479px;width:103px;">Mrisqi2025!</div>
<div class="c " style="left:792px;top:479px;width:224px;"></div>
<div class="c " style="left:1016px;top:479px;width:98px;"></div>
<div class="c " style="left:1114px;top:479px;width:163px;">Mohamad Risqi Siswanto</div>
<div class="c  tri dig" style="left:1277px;top:479px;width:121px;">3173011004010004</div>
<div class="c " style="left:1398px;top:479px;width:93px;">Dutajl123!</div>
<div class="c " style="left:1491px;top:479px;width:88px;">Mrs2025!</div>
<div class="c " style="left:1579px;top:479px;width:320px;"></div>
<div class="c num" style="left:26px;top:499px;width:25px;">13</div>
<div class="c " style="left:51px;top:499px;width:201px;">PT BLV Samudera Bersaudara</div>
<div class="c  tri dig" style="left:252px;top:499px;width:121px;">0818148454043000</div>
<div class="c " style="left:373px;top:499px;width:58px;">Ayu</div>
<div class="c " style="left:431px;top:499px;width:258px;">blvsamudera789@gmail.com</div>
<div class="c " style="left:689px;top:499px;width:103px;">blv123456</div>
<div class="c " style="left:792px;top:499px;width:224px;"></div>
<div class="c " style="left:1016px;top:499px;width:98px;">Blv123456!</div>
<div class="c " style="left:1114px;top:499px;width:163px;">Emi Pribadi</div>
<div class="c  tri dig" style="left:1277px;top:499px;width:121px;">3172044211810018</div>
<div class="c " style="left:1398px;top:499px;width:93px;">Emi2025!</div>
<div class="c " style="left:1491px;top:499px;width:88px;">Emi2025!</div>
<div class="c " style="left:1579px;top:499px;width:320px;">PPH 25 dan PPh 21</div>
<div class="c num" style="left:26px;top:519px;width:25px;">14</div>
<div class="c " style="left:51px;top:519px;width:201px;">PT Star Way</div>
<div class="c  tri dig" style="left:252px;top:519px;width:121px;">024111890042000</div>
<div class="c " style="left:373px;top:519px;width:58px;">Ayu</div>
<div class="c " style="left:431px;top:519px;width:258px;">operational.starway@gmail.com</div>
<div class="c " style="left:689px;top:519px;width:103px;">starway123456</div>
<div class="c " style="left:792px;top:519px;width:224px;"></div>
<div class="c " style="left:1016px;top:519px;width:98px;"></div>
<div class="c " style="left:1114px;top:519px;width:163px;">Rini</div>
<div class="c  tri dig" style="left:1277px;top:519px;width:121px;">3172037004700002</div>
<div class="c " style="left:1398px;top:519px;width:93px;">Rini2025!</div>
<div class="c " style="left:1491px;top:519px;width:88px;">Rini2025!</div>
<div class="c " style="left:1579px;top:519px;width:320px;">PPh 21, PPh 25, PPN</div>
<div class="c num" style="left:26px;top:539px;width:25px;">15</div>
<div class="c " style="left:51px;top:539px;width:201px;">CV Bintang Terang Timur</div>
<div class="c  tri dig" style="left:252px;top:539px;width:121px;">919262642043000</div>
<div class="c " style="left:373px;top:539px;width:58px;">Ayu</div>
<div class="c " style="left:431px;top:539px;width:258px;">btt.official@yahoo.com</div>
<div class="c " style="left:689px;top:539px;width:103px;">btterang123456</div>
<div class="c " style="left:792px;top:539px;width:224px;">btt.official@yahoo.com</div>
<div class="c " style="left:1016px;top:539px;width:98px;">btterang123456</div>
<div class="c " style="left:1114px;top:539px;width:163px;">Aldrin</div>
<div class="c  tri dig" style="left:1277px;top:539px;width:121px;">3175101710690002</div>
<div class="c " style="left:1398px;top:539px;width:93px;">Aldrin2025!</div>
<div class="c " style="left:1491px;top:539px;width:88px;">Aldrin2025!</div>
<div class="c " style="left:1579px;top:539px;width:320px;">PPh 21, PPh 25, PPN</div>
<div class="c num" style="left:26px;top:559px;width:25px;">16</div>
<div class="c " style="left:51px;top:559px;width:201px;">CV Bintang Merah Timur</div>
<div class="c  tri dig" style="left:252px;top:559px;width:121px;">420340614043000</div>
<div class="c " style="left:373px;top:559px;width:58px;">Ayu</div>
<div class="c " style="left:431px;top:559px;width:258px;">Bintangmerahtimur@gmail.com</div>
<div class="c " style="left:689px;top:559px;width:103px;">bmt123456</div>
<div class="c " style="left:792px;top:559px;width:224px;"></div>
<div class="c " style="left:1016px;top:559px;width:98px;"></div>
<div class="c " style="left:1114px;top:559px;width:163px;">Aldrin</div>
<div class="c  tri dig" style="left:1277px;top:559px;width:121px;">3175101710690002</div>
<div class="c " style="left:1398px;top:559px;width:93px;">Aldrin2025!</div>
<div class="c " style="left:1491px;top:559px;width:88px;">Aldrin2025!</div>
<div class="c " style="left:1579px;top:559px;width:320px;">0,5% dan PPh 21</div>
<div class="c num" style="left:26px;top:579px;width:25px;">17</div>
<div class="c " style="left:51px;top:579px;width:201px;">CV Ridho Utama Sejati</div>
<div class="c  tri dig" style="left:252px;top:579px;width:121px;">0630112548023000</div>
<div class="c " style="left:373px;top:579px;width:58px;">Ayu</div>
<div class="c " style="left:431px;top:579px;width:258px;">cvridhoutamasejati@gmail.com</div>
<div class="c " style="left:689px;top:579px;width:103px;">nasigoreng16</div>
<div class="c " style="left:792px;top:579px;width:224px;"></div>
<div class="c " style="left:1016px;top:579px;width:98px;"></div>
<div class="c " style="left:1114px;top:579px;width:163px;">Indah</div>
<div class="c  tri dig" style="left:1277px;top:579px;width:121px;">3275105107970013</div>
<div class="c " style="left:1398px;top:579px;width:93px;">Indah2025!</div>
<div class="c " style="left:1491px;top:579px;width:88px;">Indah2025!</div>
<div class="c " style="left:1579px;top:579px;width:320px;">0,5% dan PPh 21</div>
<div class="c num" style="left:26px;top:599px;width:25px;">18</div>
<div class="c " style="left:51px;top:599px;width:201px;">CV Langit Jaya Abadi</div>
<div class="c  tri dig" style="left:252px;top:599px;width:121px;">1000000001445929</div>
<div class="c " style="left:373px;top:599px;width:58px;">Ayu</div>
<div class="c " style="left:431px;top:599px;width:258px;">cvlangitjayaabadi@gmail.com</div>
<div class="c " style="left:689px;top:599px;width:103px;"></div>
<div class="c " style="left:792px;top:599px;width:224px;"></div>
<div class="c " style="left:1016px;top:599px;width:98px;">Langit2025!</div>
<div class="c " style="left:1114px;top:599px;width:163px;">Wardha</div>
<div class="c  tri dig" style="left:1277px;top:599px;width:121px;">3275036212680024</div>
<div class="c " style="left:1398px;top:599px;width:93px;">Wardha2025!</div>
<div class="c " style="left:1491px;top:599px;width:88px;">Wardha2025!</div>
<div class="c " style="left:1579px;top:599px;width:320px;">PPh 21, 0,5%</div>
<div class="c num" style="left:26px;top:619px;width:25px;">19</div>
<div class="c " style="left:51px;top:619px;width:201px;">PT Berdaya Energy Engineering</div>
<div class="c  tri dig" style="left:252px;top:619px;width:121px;">0430284893021000</div>
<div class="c " style="left:373px;top:619px;width:58px;">Ayu</div>
<div class="c " style="left:431px;top:619px;width:258px;">berdayaenergyengineering@gmail.com</div>
<div class="c " style="left:689px;top:619px;width:103px;">Berdaya12345</div>
<div class="c " style="left:792px;top:619px;width:224px;"></div>
<div class="c " style="left:1016px;top:619px;width:98px;">BEE060510</div>
<div class="c " style="left:1114px;top:619px;width:163px;">Ibrahim</div>
<div class="c  tri dig" style="left:1277px;top:619px;width:121px;">3175042510850007</div>
<div class="c " style="left:1398px;top:619px;width:93px;">Ibra2025!</div>
<div class="c " style="left:1491px;top:619px;width:88px;">Ibra2025!</div>
<div class="c " style="left:1579px;top:619px;width:320px;">PPh 25, PPh 21 dan PPN</div>
<div class="c num" style="left:26px;top:639px;width:25px;">20</div>
<div class="c " style="left:51px;top:639px;width:201px;">CV Rekayasa Power</div>
<div class="c  tri dig" style="left:252px;top:639px;width:121px;">0841664691015000</div>
<div class="c " style="left:373px;top:639px;width:58px;">Ayu</div>
<div class="c " style="left:431px;top:639px;width:258px;">rekayasapowersystem888@gmail.com</div>
<div class="c " style="left:689px;top:639px;width:103px;"></div>
<div class="c " style="left:792px;top:639px;width:224px;"></div>
<div class="c " style="left:1016px;top:639px;width:98px;">Diongstore888</div>
<div class="c " style="left:1114px;top:639px;width:163px;">Ibrahim</div>
<div class="c  tri dig" style="left:1277px;top:639px;width:121px;">3175042510850007</div>
<div class="c " style="left:1398px;top:639px;width:93px;">Ibra2025!</div>
<div class="c " style="left:1491px;top:639px;width:88px;">Ibra2025!</div>
<div class="c " style="left:1579px;top:639px;width:320px;">PPh 25, PPh 21 dan PPN</div>
<div class="c num" style="left:26px;top:659px;width:25px;">21</div>
<div class="c " style="left:51px;top:659px;width:201px;">Johnny Kalwani</div>
<div class="c  tri dig" style="left:252px;top:659px;width:121px;">0064123102024000</div>
<div class="c " style="left:373px;top:659px;width:58px;">Ayu</div>
<div class="c " style="left:431px;top:659px;width:258px;">johnnykalwani@yahoo.com</div>
<div class="c " style="left:689px;top:659px;width:103px;">JK12345#</div>
<div class="c " style="left:792px;top:659px;width:224px;">jaykayenterprise3@gmail.com</div>
<div class="c " style="left:1016px;top:659px;width:98px;"></div>
<div class="c " style="left:1114px;top:659px;width:163px;"></div>
<div class="c  tri dig" style="left:1277px;top:659px;width:121px;">3171051912620005</div>
<div class="c " style="left:1398px;top:659px;width:93px;">Jkay1234!</div>
<div class="c " style="left:1491px;top:659px;width:88px;">Jkay1234!</div>
<div class="c " style="left:1579px;top:659px;width:320px;">PPh Sewa</div>
<div class="c num" style="left:26px;top:679px;width:25px;">22</div>
<div class="c " style="left:51px;top:679px;width:201px;">Kalwani Stockindo Utama Kemayoran</div>
<div class="c  tri dig" style="left:252px;top:679px;width:121px;">0018371146027001</div>
<div class="c " style="left:373px;top:679px;width:58px;">Ayu</div>
<div class="c " style="left:431px;top:679px;width:258px;">kalwanistockindoo2@gmail.com</div>
<div class="c " style="left:689px;top:679px;width:103px;">Djp : kwn123456</div>
<div class="c " style="left:792px;top:679px;width:224px;">kalwanistockindo1@gmail.com</div>
<div class="c " style="left:1016px;top:679px;width:98px;">kwn123456</div>
<div class="c " style="left:1114px;top:679px;width:163px;"></div>
<div class="c  tri dig" style="left:1277px;top:679px;width:121px;">3171051912620005</div>
<div class="c " style="left:1398px;top:679px;width:93px;">Jkay1234!</div>
<div class="c " style="left:1491px;top:679px;width:88px;">Jkay1234!</div>
<div class="c " style="left:1579px;top:679px;width:320px;">PPh 21 dan PPh 25</div>
<div class="c num" style="left:26px;top:699px;width:25px;">23</div>
<div class="c " style="left:51px;top:699px;width:201px;">CV Masaba Fashion Kreasi</div>
<div class="c  tri dig" style="left:252px;top:699px;width:121px;">0108879107044000</div>
<div class="c " style="left:373px;top:699px;width:58px;">Ayu</div>
<div class="c " style="left:431px;top:699px;width:258px;">masabafashionkreasi@gmail.com</div>
<div class="c " style="left:689px;top:699px;width:103px;"></div>
<div class="c " style="left:792px;top:699px;width:224px;"></div>
<div class="c " style="left:1016px;top:699px;width:98px;"></div>
<div class="c " style="left:1114px;top:699px;width:163px;"></div>
<div class="c  tri dig" style="left:1277px;top:699px;width:121px;">3171051912620005</div>
<div class="c " style="left:1398px;top:699px;width:93px;">Jkay1234!</div>
<div class="c " style="left:1491px;top:699px;width:88px;">Jkay1234!</div>
<div class="c " style="left:1579px;top:699px;width:320px;">PPh 0,5% dan PPh 21</div>
<div class="c num" style="left:26px;top:719px;width:25px;">24</div>
<div class="c " style="left:51px;top:719px;width:201px;">PT Sahara Wellness Abadi</div>
<div class="c  tri dig" style="left:252px;top:719px;width:121px;">1000000000261897</div>
<div class="c " style="left:373px;top:719px;width:58px;">Ayu</div>
<div class="c " style="left:431px;top:719px;width:258px;">saharawellnessabadi@gmail.com</div>
<div class="c " style="left:689px;top:719px;width:103px;"></div>
<div class="c " style="left:792px;top:719px;width:224px;"></div>
<div class="c " style="left:1016px;top:719px;width:98px;"></div>
<div class="c " style="left:1114px;top:719px;width:163px;"></div>
<div class="c  tri dig" style="left:1277px;top:719px;width:121px;">1000000000261897</div>
<div class="c " style="left:1398px;top:719px;width:93px;">Sahara2025!_</div>
<div class="c " style="left:1491px;top:719px;width:88px;"></div>
<div class="c " style="left:1579px;top:719px;width:320px;">PPh 0.5 , PPh 21 , PPh Unifikasi (Situasiaonal)</div>
<div class="c num" style="left:26px;top:739px;width:25px;">25</div>
<div class="c " style="left:51px;top:739px;width:201px;">PT Jay Kay Kasindo</div>
<div class="c  tri dig" style="left:252px;top:739px;width:121px;">1000000000513795</div>
<div class="c " style="left:373px;top:739px;width:58px;">Ayu</div>
<div class="c " style="left:431px;top:739px;width:258px;"></div>
<div class="c " style="left:689px;top:739px;width:103px;"></div>
<div class="c " style="left:792px;top:739px;width:224px;"></div>
<div class="c " style="left:1016px;top:739px;width:98px;"></div>
<div class="c " style="left:1114px;top:739px;width:163px;"></div>
<div class="c  tri dig" style="left:1277px;top:739px;width:121px;">1000000000513795</div>
<div class="c " style="left:1398px;top:739px;width:93px;">Jkent2025!</div>
<div class="c " style="left:1491px;top:739px;width:88px;"></div>
<div class="c " style="left:1579px;top:739px;width:320px;">PPh 0.5 , PPh 21 , PPh Unifikasi (Situasiaonal)</div>
<div class="c num" style="left:26px;top:759px;width:25px;">26</div>
<div class="c " style="left:51px;top:759px;width:201px;">PT Jejak Karya Bumi</div>
<div class="c  tri dig" style="left:252px;top:759px;width:121px;">1000000001118382</div>
<div class="c " style="left:373px;top:759px;width:58px;">Ayu</div>
<div class="c " style="left:431px;top:759px;width:258px;">kalwanistockindoo2@gmail.com</div>
<div class="c  nbr" style="left:689px;top:759px;width:103px;"></div>
<div class="c " style="left:792px;top:759px;width:224px;"></div>
<div class="c " style="left:1016px;top:759px;width:98px;">Jejaka2025!</div>
<div class="c " style="left:1114px;top:759px;width:163px;"></div>
<div class="c  tri dig" style="left:1277px;top:759px;width:121px;">3171052110980007</div>
<div class="c " style="left:1398px;top:759px;width:93px;">Roka2025!</div>
<div class="c " style="left:1491px;top:759px;width:88px;">Roka2025!</div>
<div class="c " style="left:1579px;top:759px;width:320px;"></div>
<div class="c num" style="left:26px;top:779px;width:25px;">27</div>
<div class="c " style="left:51px;top:779px;width:201px;">PT Kanawa Abadi Nusantara</div>
<div class="c  tri dig" style="left:252px;top:779px;width:121px;">0866906720416000</div>
<div class="c " style="left:373px;top:779px;width:58px;">Ayu</div>
<div class="c " style="left:431px;top:779px;width:258px;">kawanaabadinusantara@gmail.com</div>
<div class="c " style="left:689px;top:779px;width:103px;">manis12345</div>
<div class="c " style="left:792px;top:779px;width:224px;"></div>
<div class="c " style="left:1016px;top:779px;width:98px;">kan123456</div>
<div class="c  caps" style="left:1114px;top:779px;width:163px;">NUNUNG FRIDAYATI</div>
<div class="c  tri dig" style="left:1277px;top:779px;width:121px;">3671064401660002</div>
<div class="c " style="left:1398px;top:779px;width:93px;">Nfps123456@</div>
<div class="c " style="left:1491px;top:779px;width:88px;">Nfps123456@</div>
<div class="c " style="left:1579px;top:779px;width:320px;">PPh 21,Unifikasi,PPN</div>
<div class="c num" style="left:26px;top:799px;width:25px;">28</div>
<div class="c " style="left:51px;top:799px;width:201px;">CV Pergota Karya Mandiri</div>
<div class="c  tri dig" style="left:252px;top:799px;width:121px;">0503867160416000</div>
<div class="c " style="left:373px;top:799px;width:58px;">Ayu</div>
<div class="c " style="left:431px;top:799px;width:258px;">pergotakaryamandiri@gmail.com</div>
<div class="c " style="left:689px;top:799px;width:103px;">pkm12345</div>
<div class="c " style="left:792px;top:799px;width:224px;"></div>
<div class="c " style="left:1016px;top:799px;width:98px;">pkm12345</div>
<div class="c  caps" style="left:1114px;top:799px;width:163px;">YUNIA FITRIANINGSIH</div>
<div class="c  tri dig" style="left:1277px;top:799px;width:121px;">3671064906860004</div>
<div class="c " style="left:1398px;top:799px;width:93px;">Yf123456@</div>
<div class="c " style="left:1491px;top:799px;width:88px;">Yf123456@</div>
<div class="c " style="left:1579px;top:799px;width:320px;">PPh 21,0,5</div>
<div class="c num" style="left:26px;top:819px;width:25px;">29</div>
<div class="c " style="left:51px;top:819px;width:201px;">CV Malik Mitra Persada</div>
<div class="c  tri dig" style="left:252px;top:819px;width:121px;">0503934820453000</div>
<div class="c " style="left:373px;top:819px;width:58px;">Ayu</div>
<div class="c  caps" style="left:431px;top:819px;width:258px;">MALIKMITRAPERSADA@GMAIL.COM</div>
<div class="c " style="left:689px;top:819px;width:103px;">mmp12345</div>
<div class="c " style="left:792px;top:819px;width:224px;"></div>
<div class="c " style="left:1016px;top:819px;width:98px;">mmp12345</div>
<div class="c  caps" style="left:1114px;top:819px;width:163px;">AHMAD MUHARAM</div>
<div class="c  tri dig" style="left:1277px;top:819px;width:121px;">3276033110810001</div>
<div class="c " style="left:1398px;top:819px;width:93px;">Am123456@</div>
<div class="c " style="left:1491px;top:819px;width:88px;">Am123456@</div>
<div class="c " style="left:1579px;top:819px;width:320px;">PPh 21,0,5</div>
<div class="c num" style="left:26px;top:839px;width:25px;">30</div>
<div class="c " style="left:51px;top:839px;width:201px;">CV Kencana Berkah Kontruksi</div>
<div class="c  tri dig" style="left:252px;top:839px;width:121px;">0054772900416000</div>
<div class="c " style="left:373px;top:839px;width:58px;">Ayu</div>
<div class="c  caps" style="left:431px;top:839px;width:258px;">KENCANABERKAHKONTRUKSI@GMAIL.COM</div>
<div class="c " style="left:689px;top:839px;width:103px;">kbk123456</div>
<div class="c " style="left:792px;top:839px;width:224px;"></div>
<div class="c " style="left:1016px;top:839px;width:98px;">kbk123456</div>
<div class="c  caps" style="left:1114px;top:839px;width:163px;">RIRI OKTARINI</div>
<div class="c  tri dig" style="left:1277px;top:839px;width:121px;">3671064910920003</div>
<div class="c " style="left:1398px;top:839px;width:93px;">Ro123456@</div>
<div class="c " style="left:1491px;top:839px;width:88px;">Ro123456@</div>
<div class="c " style="left:1579px;top:839px;width:320px;">PPh 21,0,5</div>
<div class="c num" style="left:26px;top:859px;width:25px;">31</div>
<div class="c  caps" style="left:51px;top:859px;width:201px;">PT BERJAYA BERKAH INFRASTRUKTUR</div>
<div class="c  tri dig" style="left:252px;top:859px;width:121px;">0054772900416000</div>
<div class="c " style="left:373px;top:859px;width:58px;">Ayu</div>
<div class="c  caps" style="left:431px;top:859px;width:258px;">PTBERJAYABERKAHINFRASTRUKTUR@GMAIL.COM</div>
<div class="c " style="left:689px;top:859px;width:103px;">Kencana2025!</div>
<div class="c " style="left:792px;top:859px;width:224px;">Bbi12345!</div>
<div class="c " style="left:1016px;top:859px;width:98px;"></div>
<div class="c  caps" style="left:1114px;top:859px;width:163px;">RIRI OKTARINI</div>
<div class="c  tri dig" style="left:1277px;top:859px;width:121px;">3671064910920003</div>
<div class="c " style="left:1398px;top:859px;width:93px;">Ro123456@</div>
<div class="c " style="left:1491px;top:859px;width:88px;">Ro123456@</div>
<div class="c " style="left:1579px;top:859px;width:320px;">PPH 21, PPN</div>
<div class="c num" style="left:26px;top:879px;width:25px;">32</div>
<div class="c " style="left:51px;top:879px;width:201px;">CV Mahri Sejahtera Bersama</div>
<div class="c  tri dig" style="left:252px;top:879px;width:121px;">1000000003339032</div>
<div class="c " style="left:373px;top:879px;width:58px;">Ayu</div>
<div class="c " style="left:431px;top:879px;width:258px;">mahrisejahterabersama@gmail.com</div>
<div class="c " style="left:689px;top:879px;width:103px;">Mahri2025$</div>
<div class="c " style="left:792px;top:879px;width:224px;"></div>
<div class="c " style="left:1016px;top:879px;width:98px;">Mahri2025$</div>
<div class="c  caps" style="left:1114px;top:879px;width:163px;">MUHAMMAD RIJJLAN BAIHAQI</div>
<div class="c  tri dig" style="left:1277px;top:879px;width:121px;">3671060105040001</div>
<div class="c " style="left:1398px;top:879px;width:93px;">Rijjlan123!</div>
<div class="c " style="left:1491px;top:879px;width:88px;">Rijjlan123!</div>
<div class="c " style="left:1579px;top:879px;width:320px;">PPh 21,0,5</div>
<div class="c num" style="left:26px;top:899px;width:25px;">33</div>
<div class="c " style="left:51px;top:899px;width:201px;">CV Kencana Malik</div>
<div class="c  tri dig" style="left:252px;top:899px;width:121px;">1000000005586171</div>
<div class="c " style="left:373px;top:899px;width:58px;">Ayu</div>
<div class="c " style="left:431px;top:899px;width:258px;">kencanamalikbersama@gmail.com</div>
<div class="c " style="left:689px;top:899px;width:103px;">Kmb2025!</div>
<div class="c " style="left:792px;top:899px;width:224px;"></div>
<div class="c " style="left:1016px;top:899px;width:98px;">Kmb2025!</div>
<div class="c  caps" style="left:1114px;top:899px;width:163px;">MUHAMMAD RIJJLAN BAIHAQI</div>
<div class="c  tri dig" style="left:1277px;top:899px;width:121px;">3671060105040001</div>
<div class="c " style="left:1398px;top:899px;width:93px;">Rijjlan123!</div>
<div class="c " style="left:1491px;top:899px;width:88px;">Rijjlan123!</div>
<div class="c " style="left:1579px;top:899px;width:320px;">PPh 21,0,5</div>
<div class="c num" style="left:26px;top:919px;width:25px;">34</div>
<div class="c " style="left:51px;top:919px;width:201px;">CV Nusantara Persada Berkah</div>
<div class="c  tri dig" style="left:252px;top:919px;width:121px;">1000000005648940</div>
<div class="c " style="left:373px;top:919px;width:58px;">Ayu</div>
<div class="c " style="left:431px;top:919px;width:258px;">nusantarapersadaberkah@gmail.com</div>
<div class="c " style="left:689px;top:919px;width:103px;">Nusa2025!</div>
<div class="c " style="left:792px;top:919px;width:224px;"></div>
<div class="c " style="left:1016px;top:919px;width:98px;">Nusa2025!</div>
<div class="c  caps" style="left:1114px;top:919px;width:163px;">MUHAMMAD RIJJLAN BAIHAQI</div>
<div class="c  tri dig" style="left:1277px;top:919px;width:121px;">3671060105040001</div>
<div class="c " style="left:1398px;top:919px;width:93px;">Rijjlan123!</div>
<div class="c " style="left:1491px;top:919px;width:88px;">Rijjlan123!</div>
<div class="c " style="left:1579px;top:919px;width:320px;">PPh 21,0,5</div>
<div class="c " style="left:26px;top:939px;width:25px;"></div>
<div class="c " style="left:51px;top:939px;width:201px;"></div>
<div class="c " style="left:252px;top:939px;width:121px;"></div>
<div class="c " style="left:373px;top:939px;width:58px;"></div>
<div class="c " style="left:431px;top:939px;width:258px;"></div>
<div class="c " style="left:689px;top:939px;width:103px;"></div>
<div class="c " style="left:792px;top:939px;width:224px;"></div>
<div class="c " style="left:1016px;top:939px;width:98px;"></div>
<div class="c " style="left:1114px;top:939px;width:163px;"></div>
<div class="c " style="left:1277px;top:939px;width:121px;"></div>
<div class="c " style="left:1398px;top:939px;width:93px;"></div>
<div class="c " style="left:1491px;top:939px;width:88px;"></div>
<div class="c " style="left:1579px;top:939px;width:320px;"></div>
<div class="c w" style="left:26px;top:959px;width:25px;"></div>
<div class="c w" style="left:51px;top:959px;width:201px;"></div>
<div class="c w" style="left:252px;top:959px;width:121px;"></div>
<div class="c w" style="left:373px;top:959px;width:58px;"></div>
<div class="c w" style="left:431px;top:959px;width:258px;"></div>
<div class="c w" style="left:689px;top:959px;width:103px;"></div>
<div class="c w" style="left:792px;top:959px;width:224px;"></div>
<div class="c w" style="left:1016px;top:959px;width:98px;"></div>
<div class="c w" style="left:1114px;top:959px;width:163px;"></div>
<div class="c w" style="left:1277px;top:959px;width:121px;"></div>
<div class="c w" style="left:1398px;top:959px;width:93px;"></div>
<div class="c w" style="left:1491px;top:959px;width:88px;"></div>
<div class="c w" style="left:1579px;top:959px;width:320px;"></div><div id="active"></div><div id="vscroll"><div class="a" style="left:6px;top:6px;width:0;height:0;border-left:4px solid transparent;border-right:4px solid transparent;border-bottom:7px solid #9a9a9a"></div><div class="a" style="left:6px;top:18px;width:9px;height:560px;border-radius:5px;background:#9b9b9b"></div><div class="a" style="left:6px;top:751px;width:0;height:0;border-left:4px solid transparent;border-right:4px solid transparent;border-top:7px solid #9a9a9a"></div></div></div><div id="tabbar" class="a" style="left:0;top:978px;width:1920px;height:32px;background:#101213">
 <svg class="a" style="left:27px;top:9px" width="9" height="14" viewBox="0 0 9 14" fill="none" stroke="#8a8a8a" stroke-width="1.3"><path d="M7 1L2 7l5 6"/></svg>
 <svg class="a" style="left:59px;top:9px" width="9" height="14" viewBox="0 0 9 14" fill="none" stroke="#8a8a8a" stroke-width="1.3"><path d="M2 1l5 6-5 6"/></svg>
 <div class="a" style="left:116px;top:0;width:90px;height:27px;background:#fff;border-radius:0 0 6px 6px"></div>
 <div class="a" style="left:124px;top:5px;font-size:14.5px;color:#262626">Daftar klien</div>
 <div class="a" style="left:124px;top:22px;width:74px;height:2px;background:#1e6e45"></div>
 <div class="a" style="left:210px;top:7px;width:1px;height:17px;background:#5a5a5a"></div>
 <div class="a" style="left:226px;top:8px;font-size:14px;color:#f2f2f2">rekap pelaporan pajak</div>
 <div class="a" style="left:377px;top:7px;width:1px;height:17px;background:#5a5a5a"></div>
 <div class="a" style="left:391px;top:8px;font-size:14px;color:#f2f2f2">rekap data</div>
 <div class="a" style="left:470px;top:7px;width:1px;height:17px;background:#5a5a5a"></div>
 <svg class="a" style="left:511px;top:8px" width="13" height="13" viewBox="0 0 13 13" stroke="#e0e0e0" stroke-width="1.2"><path d="M6.5 0.5v12M0.5 6.5h12"/></svg>
 <div class="a" style="left:1154px;top:10px;width:2px;height:2px;background:#ddd"></div>
 <div class="a" style="left:1154px;top:15px;width:2px;height:2px;background:#ddd"></div>
 <div class="a" style="left:1154px;top:20px;width:2px;height:2px;background:#ddd"></div>
 <div class="a" style="left:1176px;top:11px;width:0;height:0;border-top:4px solid transparent;border-bottom:4px solid transparent;border-right:7px solid #9a9a9a"></div>
 <div class="a" style="left:1188px;top:11px;width:304px;height:9px;background:#9b9b9b;border-radius:5px"></div>
 <div class="a" style="left:1889px;top:11px;width:0;height:0;border-top:4px solid transparent;border-bottom:4px solid transparent;border-left:7px solid #9a9a9a"></div>
</div>
<div id="status" class="a" style="left:0;top:1010px;width:1920px;height:22px;background:#151314;border-top:1px solid #2a2a2a">
 <div class="a" style="left:12px;top:4px;font-size:11.5px;color:#e8e8e8">Ready</div>
 <svg class="a" style="left:61px;top:3px" width="15" height="15" viewBox="0 0 15 15" fill="none" stroke="#e8e8e8" stroke-width="1.1"><circle cx="7" cy="2.5" r="1.6"/><path d="M1.5 5h11M7 5v4l-3 5M7 9l3 5M9 10l4 4M13 10l-4 4"/></svg>
 <div class="a" style="left:80px;top:4px;font-size:11px;font-weight:bold;color:#f0f0f0;letter-spacing:-0.2px">Accessibility: Investigate</div>
 <div class="a" style="left:1620px;top:0;width:40px;height:21px;background:#2a2a2a"></div>
 <svg class="a" style="left:1632px;top:3px" width="14" height="14" viewBox="0 0 14 14" fill="none" stroke="#e0e0e0" stroke-width="1.1"><rect x="0.5" y="0.5" width="13" height="13"/><path d="M0.5 5h13M0.5 9.5h13M5 0.5v13M9.5 0.5v13"/></svg>
 <svg class="a" style="left:1673px;top:3px" width="14" height="14" viewBox="0 0 14 14" fill="none" stroke="#e0e0e0" stroke-width="1.1"><rect x="0.5" y="0.5" width="13" height="13"/><rect x="3" y="3" width="8" height="8"/><path d="M4.5 5.5h5M4.5 7.5h5M4.5 9h5"/></svg>
 <svg class="a" style="left:1713px;top:3px" width="14" height="14" viewBox="0 0 14 14" fill="none" stroke="#e0e0e0" stroke-width="1.1"><rect x="0.5" y="0.5" width="13" height="13"/><path d="M5 0.5v7h8.5"/></svg>
 <div class="a" style="left:1746px;top:10px;width:8px;height:1px;background:#e0e0e0"></div>
 <div class="a" style="left:1759px;top:10px;width:100px;height:1px;background:#8a8a8a"></div>
 <div class="a" style="left:1806px;top:4px;width:5px;height:13px;background:#9a9a9a"></div>
 <svg class="a" style="left:1863px;top:6px" width="10" height="10" viewBox="0 0 10 10" stroke="#e0e0e0" stroke-width="1.1"><path d="M5 0v10M0 5h10"/></svg>
 <div class="a" style="left:1885px;top:4px;font-size:12px;color:#e8e8e8">100%</div>
</div>
<div id="taskbar" class="a" style="left:0;top:1032px;width:1920px;height:48px;background:#1b2327">
 <svg class="a" style="left:16px;top:14px" width="30" height="24" viewBox="0 0 30 24"><ellipse cx="14" cy="15" rx="12" ry="7" fill="#c9dcf5"/><ellipse cx="10" cy="12" rx="7" ry="6" fill="#dbe8f8"/><ellipse cx="18" cy="18" rx="9" ry="4" fill="#a9c4ea"/></svg>
 <div class="a" style="left:29px;top:5px;width:17px;height:17px;border-radius:50%;background:#f08b8b;color:#222;font-size:11px;line-height:17px;text-align:center">3</div>
 <div class="a" style="left:50px;top:8px;font-size:12px;color:#f0f0f0">28°C</div>
 <div class="a" style="left:50px;top:25px;font-size:12px;color:#d0d0d0">Berawan</div>
 <svg class="a" style="left:550px;top:13px" width="24" height="24" viewBox="0 0 24 24"><rect x="0" y="0" width="11.3" height="11.3" fill="#5ec8f8"/><rect x="12.7" y="0" width="11.3" height="11.3" fill="#4cc2ff"/><rect x="0" y="12.7" width="11.3" height="11.3" fill="#3fb8f5"/><rect x="12.7" y="12.7" width="11.3" height="11.3" fill="#2fa8ea"/></svg>
 <div class="a" style="left:587px;top:8px;width:220px;height:32px;border-radius:16px;background:#2c3438;border:1px solid #353d41"></div>
 <svg class="a" style="left:597px;top:16px" width="15" height="15" viewBox="0 0 15 15" fill="none" stroke="#e8e8e8" stroke-width="1.5"><circle cx="6" cy="6" r="5"/><path d="M9.5 9.5L14 14"/></svg>
 <div class="a" style="left:623px;top:16px;font-size:13.5px;color:#d8d8d8">Search</div>
 <svg class="a" style="left:757px;top:9px" width="46" height="30" viewBox="0 0 46 30"><ellipse cx="26" cy="26" rx="19" ry="3" fill="#d8c7a0"/><path d="M4 9l4-5 3 1 2 4c3 1 6 2 10 2h9c3 0 5 2 5 5v2l-1 9h-2l-1-8c-3 1-8 1-12 0l-1 8h-2l-1-8-2 8h-2l0-10c-2-2-3-4-4-6l-3 1z" fill="#c9c3d8"/><path d="M12 9l2 6M16 11l1 6M20 11l1 7M24 11v7M28 11v6M32 12l1 5M6 6l2 3" stroke="#3f3850" stroke-width="1.3"/></svg>
 <svg class="a" style="left:818px;top:13px" width="26" height="23" viewBox="0 0 26 23"><rect x="0" y="8" width="16" height="14" rx="1.5" fill="#7e8488"/><rect x="9" y="0" width="17" height="15" rx="1.5" fill="#e6e6e6"/></svg>
 <svg class="a" style="left:861px;top:12px" width="27" height="24" viewBox="0 0 27 24"><path d="M0 3a2 2 0 0 1 2-2h7l3 3h13a2 2 0 0 1 2 2v16a2 2 0 0 1-2 2H2a2 2 0 0 1-2-2z" fill="#f5c443"/><rect x="0" y="8" width="27" height="16" rx="2" fill="#ffd866"/><rect x="8" y="16" width="11" height="8" fill="#2f7ad8"/></svg>
 <div class="a" style="left:872px;top:41px;width:7px;height:3px;border-radius:2px;background:#9aa0a4"></div>
 <svg class="a" style="left:906px;top:11px" width="27" height="27" viewBox="0 0 27 27"><circle cx="13.5" cy="13.5" r="13" fill="#1a7fe0"/><path d="M1 12C2 5 8 .5 14 .5c7 0 12.5 5 12.5 11 0 4-3 6.5-6.5 6.5-3 0-4-1.5-4-3 0-3 2-3 2-5.5C18 6 15.5 5 13 5 7 5 3 9 1 12z" fill="#58d07a"/><path d="M6 20c1-6 5-9 9-9 3 0 4 2 4 3.5" stroke="#36b8f2" stroke-width="3" fill="none"/></svg>
 <svg class="a" style="left:950px;top:10px" width="27" height="28" viewBox="0 0 27 28"><path d="M7 8V5a6.5 6.5 0 0 1 13 0v3" stroke="#5ab0f0" stroke-width="2" fill="none"/><rect x="1" y="7" width="25" height="20" rx="3" fill="#f4f4f4"/><rect x="8" y="12" width="5" height="5" fill="#f25022"/><rect x="14" y="12" width="5" height="5" fill="#7fba00"/><rect x="8" y="18" width="5" height="5" fill="#00a4ef"/><rect x="14" y="18" width="5" height="5" fill="#ffb900"/></svg>
 <svg class="a" style="left:995px;top:11px" width="26" height="26" viewBox="0 0 26 26"><path d="M13 1a12 12 0 0 0-10.3 18L1 25l6.2-1.6A12 12 0 1 0 13 1z" fill="#25d366"/><path d="M13 3.5a9.5 9.5 0 0 0-8 14.6l-1 3.5 3.6-1A9.5 9.5 0 1 0 13 3.5z" fill="#1b2327"/><path d="M9 8c1-1 2 0 2.5 1.5s-1 2 0 3 2 2.5 3 2.5 1.5-1.5 3 0 0 2.5-1 3c-3 1-9-5-8.5-9.5z" fill="#25d366"/></svg>
 <div class="a" style="left:1004px;top:41px;width:7px;height:3px;border-radius:2px;background:#9aa0a4"></div>
 <svg class="a" style="left:1039px;top:11px" width="27" height="27" viewBox="0 0 27 27"><circle cx="13" cy="14" r="12.5" fill="#e33b2e"/><path d="M13 14L2.2 7.8A12.5 12.5 0 0 0 7 25z" fill="#2ca24f"/><path d="M13 14l6 11A12.5 12.5 0 0 0 24 7.8z" fill="#f9c21a"/><path d="M13 14L24 7.8 13 7.8z" fill="#f9c21a"/><circle cx="13" cy="14" r="5.5" fill="#fff"/><circle cx="13" cy="14" r="4.3" fill="#1a73e8"/></svg>
 <div class="a" style="left:1052px;top:5px;width:14px;height:14px;border-radius:50%;background:#6b4a3a;color:#eee;font-size:9px;line-height:14px;text-align:center">k</div>
 <div class="a" style="left:1048px;top:41px;width:7px;height:3px;border-radius:2px;background:#9aa0a4"></div>
 <svg class="a" style="left:1083px;top:11px" width="26" height="27" viewBox="0 0 26 27"><rect x="1" y="1" width="19" height="19" rx="2" fill="#f2f2f2"/><path d="M4 4h13v13H4z" fill="none" stroke="#d83b3b" stroke-width="1.5" stroke-dasharray="2 1.5"/><rect x="6" y="6" width="9" height="9" fill="#c8c8c8"/><circle cx="17" cy="22" r="2.5" fill="none" stroke="#3aa0e8" stroke-width="1.6"/><circle cx="22" cy="17" r="2.5" fill="none" stroke="#3aa0e8" stroke-width="1.6"/><path d="M13 16l6 4M16 13l4 6" stroke="#3aa0e8" stroke-width="1.4"/></svg>
 <svg class="a" style="left:1128px;top:11px" width="21" height="27" viewBox="0 0 21 27"><rect x="0" y="0" width="21" height="27" rx="2" fill="#5d6a74"/><rect x="3" y="3" width="15" height="5" fill="#8ad0f8"/><g fill="#d8dde2"><rect x="3" y="11" width="4" height="3"/><rect x="8.5" y="11" width="4" height="3"/><rect x="3" y="16" width="4" height="3"/><rect x="8.5" y="16" width="4" height="3"/><rect x="3" y="21" width="4" height="3"/><rect x="8.5" y="21" width="4" height="3"/></g><rect x="14" y="11" width="4" height="13" fill="#3a8fd8"/></svg>
 <svg class="a" style="left:1172px;top:10px" width="22" height="28" viewBox="0 0 22 28"><rect x="0" y="3" width="22" height="24" rx="2" fill="#3d8ee8"/><rect x="2" y="6" width="18" height="19" fill="#5fb0f8"/><path d="M4 10h14M4 14h14M4 18h14M4 22h10" stroke="#1e5fb0" stroke-width="1.3"/><path d="M4 0v5M8 0v5M12 0v5M16 0v5" stroke="#cfe6fb" stroke-width="1.4"/><rect x="0" y="25" width="22" height="3" fill="#f2a33a"/></svg>
 <svg class="a" style="left:1215px;top:11px" width="26" height="26" viewBox="0 0 26 26"><circle cx="13" cy="13" r="12.5" fill="#e8334a"/><path d="M8 19L13 6l5 13" stroke="#fff" stroke-width="2.4" fill="none" stroke-linejoin="round"/></svg>
 <div class="a" style="left:1252px;top:4px;width:38px;height:40px;border-radius:5px;background:#232b2f;border:1px solid #2d3539"></div>
 <svg class="a" style="left:1257px;top:12px" width="27" height="25" viewBox="0 0 27 25"><rect x="6" y="0" width="21" height="25" rx="2" fill="#21a366"/><rect x="6" y="0" width="21" height="8" fill="#33c481"/><rect x="6" y="16" width="21" height="9" fill="#107c41"/><rect x="0" y="6" width="13" height="13" rx="1.5" fill="#185c37"/><path d="M3.5 9l6 7M9.5 9l-6 7" stroke="#fff" stroke-width="1.8"/></svg>
 <div class="a" style="left:1263px;top:42px;width:17px;height:3px;border-radius:2px;background:#4cc2ff"></div>
 <svg class="a" style="left:1302px;top:12px" width="26" height="23" viewBox="0 0 26 23"><rect x="0" y="0" width="26" height="23" rx="2" fill="#3a3f44"/><rect x="0" y="0" width="26" height="4" fill="#6f767c"/><path d="M4 8l5 4-5 4" stroke="#e8e8e8" stroke-width="1.8" fill="none"/><path d="M11 17h8" stroke="#e8e8e8" stroke-width="1.8"/></svg>
 <div class="a" style="left:1312px;top:41px;width:7px;height:3px;border-radius:2px;background:#9aa0a4"></div>
 <svg class="a" style="left:1346px;top:10px" width="26" height="27" viewBox="0 0 26 27"><path d="M1 2l7 3 5-4 5 4 7-3v16l-12 8-12-8z" fill="#c8102e"/><path d="M6 9l7 5 7-5v8l-7 5-7-5z" fill="#1b2327"/><path d="M9 13l4 3 4-3v3l-4 3-4-3z" fill="#c8102e"/></svg>
 <div class="a" style="left:1356px;top:41px;width:7px;height:3px;border-radius:2px;background:#9aa0a4"></div>
 <svg class="a" style="left:1696px;top:19px" width="12" height="8" viewBox="0 0 12 8" fill="none" stroke="#e8e8e8" stroke-width="1.5"><path d="M1 7l5-5 5 5"/></svg>
 <svg class="a" style="left:1725px;top:18px" width="18" height="14" viewBox="0 0 18 14" fill="none" stroke="#8a9094" stroke-width="1.3"><path d="M4 12h10a3.5 3.5 0 0 0 0-7 5 5 0 0 0-9.5 1A3 3 0 0 0 4 12z"/><path d="M2 1l14 12"/></svg>
 <svg class="a" style="left:1757px;top:15px" width="18" height="18" viewBox="0 0 18 18" fill="none" stroke="#e8e8e8" stroke-width="1.3"><rect x="0.5" y="2.5" width="13" height="10"/><path d="M4 16h6M7 12.5V16"/><rect x="11" y="0.5" width="6" height="8" fill="#1b2327"/></svg>
 <svg class="a" style="left:1781px;top:17px" width="18" height="15" viewBox="0 0 18 15" fill="none" stroke="#e8e8e8" stroke-width="1.3"><path d="M1 5h3l4-4v13l-4-4H1z"/><path d="M11 4.5c1.5 1.5 1.5 4.5 0 6M13.5 2.5c2.5 2.5 2.5 7.5 0 10"/></svg>
 <div class="a" style="left:1847px;top:9px;font-size:12px;color:#f0f0f0">10:38</div>
 <div class="a" style="left:1815px;top:25px;font-size:12px;color:#f0f0f0">31/01/2026</div>
 <svg class="a" style="left:1884px;top:16px" width="16" height="17" viewBox="0 0 16 17" fill="none" stroke="#e8e8e8" stroke-width="1.2"><path d="M2 12c1-1 1.5-2 1.5-5a4.5 4.5 0 0 1 9 0c0 3 .5 4 1.5 5z"/><path d="M6 14a2 2 0 0 0 4 0"/><text x="9" y="6" font-size="6" fill="#e8e8e8" stroke="none" font-family="Liberation Sans">z</text></svg>
</div>
</body></html>
